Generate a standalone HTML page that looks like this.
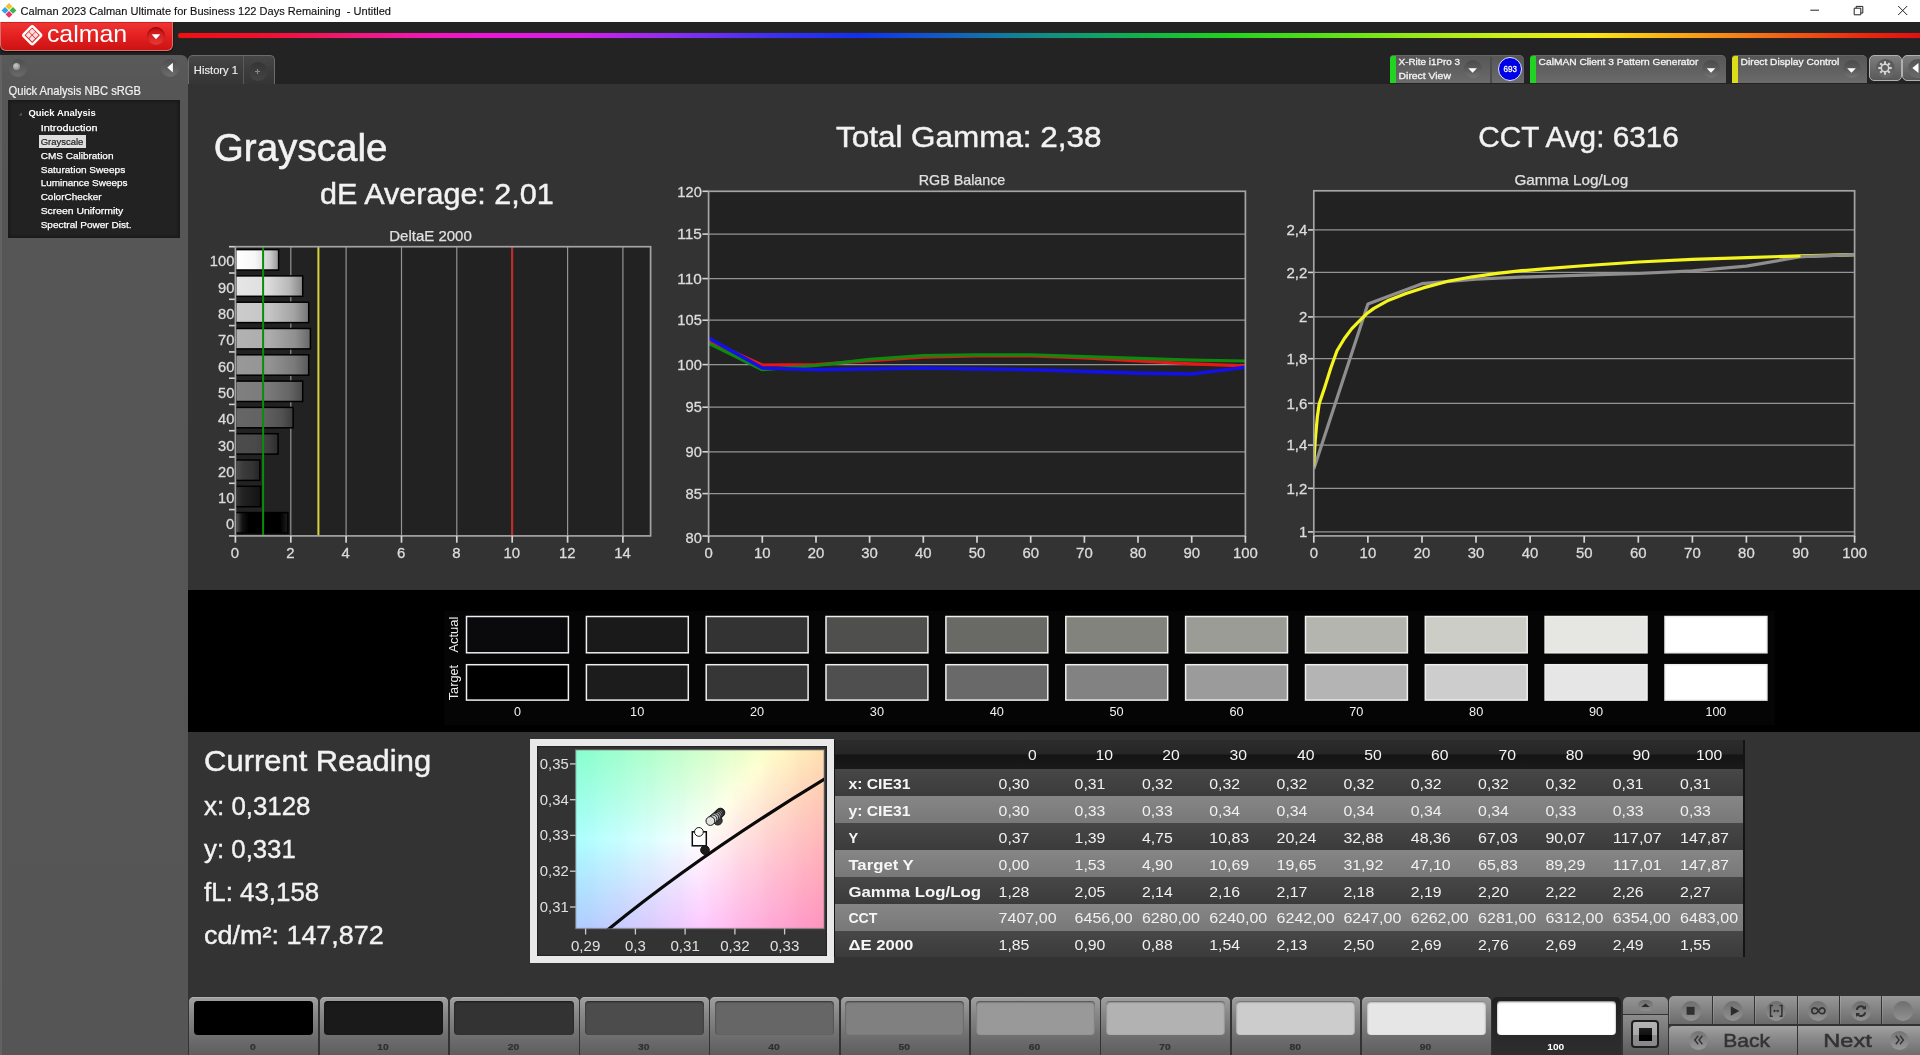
<!DOCTYPE html>
<html lang="en"><head><meta charset="utf-8"><title>Calman 2023 - Grayscale</title>
<style>
html,body{margin:0;padding:0}
body{width:1920px;height:1055px;position:relative;overflow:hidden;background:#333;font-family:"Liberation Sans", sans-serif}
body>div{position:absolute;box-sizing:border-box}
body>div div{position:absolute;box-sizing:border-box}
svg#ov{position:absolute;left:0;top:0;will-change:transform}
svg text{font-family:"Liberation Sans", sans-serif}

</style></head><body>
<div style="left:0px;top:0px;width:1920px;height:22px;background:#fff"></div>
<div style="left:0px;top:22px;width:1920px;height:62px;background:#232323"></div>
<div style="left:178px;top:33.3px;width:1742px;height:4.7px;border-radius:3px 0 0 3px;box-shadow:0 0 1.5px rgba(150,60,60,.45);background:linear-gradient(to right,#f01010 0%,#f01030 5%,#f01878 10%,#f018b0 13.9%,#e818d8 17.9%,#d020e8 23.2%,#8830f0 28.5%,#4030f0 33.8%,#1030f0 39%,#1060c0 44.3%,#108c88 49.5%,#10b050 54.8%,#20d020 60%,#50e018 65.3%,#90e818 70.5%,#c8f018 75.8%,#f8e818 81%,#f8a818 86.3%,#f06818 91.6%,#e82810 96.8%,#e01010 100%)"></div>
<div style="left:0px;top:22px;width:172.5px;height:28.5px;border-radius:0 0 6px 6px;background:linear-gradient(#b81818 0,#ee3434 5%,#e62222 45%,#cc1212 100%);border:1px solid #d87070;border-top:none;box-shadow:0 1px 2px rgba(0,0,0,.7)"></div>
<div style="left:147px;top:27px;width:18px;height:18px;border-radius:9px;background:linear-gradient(#c40d0d,#e83a3a);box-shadow:inset 0 1px 2px rgba(90,0,0,.6)"></div>
<div style="left:0px;top:54.5px;width:188px;height:1001px;background:linear-gradient(#5a5a5a 0,#565656 30px,#555555 100%);border-top-right-radius:7px;box-shadow:inset 2px 0 0 #626262"></div>
<div style="left:8.5px;top:59px;width:18px;height:18px;border-radius:9px;background:linear-gradient(#4e4e4e,#6a6a6a)"></div>
<div style="left:13.4px;top:63.2px;width:7px;height:7px;border-radius:4px;background:radial-gradient(circle at 40% 35%,#c8c8c8 0,#8a8a8a 80%)"></div>
<div style="left:161px;top:59.3px;width:18px;height:18px;border-radius:9px;background:linear-gradient(#4e4e4e,#6c6c6c)"></div>
<div style="left:8px;top:100px;width:172px;height:138px;background:#222;border:1px solid #1a1a1a;box-shadow:inset 0 0 3px #111"></div>
<div style="left:38.5px;top:135.2px;width:47.5px;height:13px;background:#dedede"></div>
<div style="left:187.8px;top:55px;width:86.8px;height:29px;border-radius:5px 5px 0 0;border:1px solid #6c6c6c;border-bottom:none;background:linear-gradient(#474747,#3a3a3a 60%,#353535)"></div>
<div style="left:242.5px;top:56px;width:1.5px;height:28px;background:#5a5a5a"></div>
<div style="left:248.5px;top:62px;width:18px;height:18px;border-radius:9px;background:linear-gradient(#353535,#434343);box-shadow:0 1px 0 rgba(255,255,255,.06)"></div>
<div style="left:1390px;top:55px;width:134px;height:28px;border-radius:4px 5px 0 0;background:linear-gradient(#565656,#646464 70%,#6b6b6b);box-shadow:inset 0 1px 0 #666"></div>
<div style="left:1390px;top:55.5px;width:6px;height:27.5px;border-radius:3px 0 0 0;background:#22d422"></div>
<div style="left:1463.6px;top:60px;width:18px;height:18px;border-radius:9px;background:linear-gradient(#4a4a4a 0,#5c5c5c 55%,#747474 100%)"></div>
<div style="left:1490.3px;top:57px;width:1.5px;height:26px;background:#4c4c4c"></div>
<div style="left:1498px;top:57px;width:24.4px;height:24.4px;border-radius:13px;background:#0000e6;border:1.3px solid #e6e6ff"></div>
<div style="left:1530px;top:55px;width:196px;height:28px;border-radius:4px 5px 0 0;background:linear-gradient(#565656,#646464 70%,#6b6b6b);box-shadow:inset 0 1px 0 #666"></div>
<div style="left:1530px;top:55.5px;width:6px;height:27.5px;border-radius:3px 0 0 0;background:#22d422"></div>
<div style="left:1702px;top:60px;width:18px;height:18px;border-radius:9px;background:linear-gradient(#4a4a4a 0,#5c5c5c 55%,#747474 100%)"></div>
<div style="left:1732px;top:55px;width:135px;height:28px;border-radius:4px 5px 0 0;background:linear-gradient(#565656,#646464 70%,#6b6b6b);box-shadow:inset 0 1px 0 #666"></div>
<div style="left:1732px;top:55.5px;width:6px;height:27.5px;border-radius:3px 0 0 0;background:#dcdc18"></div>
<div style="left:1842.5px;top:60px;width:18px;height:18px;border-radius:9px;background:linear-gradient(#4a4a4a 0,#5c5c5c 55%,#747474 100%)"></div>
<div style="left:1869px;top:55px;width:32.5px;height:26px;border-radius:5px;border:1px solid #b0b0b0;background:linear-gradient(#7e7e7e,#585858)"></div>
<div style="left:1875.5px;top:58.5px;width:19px;height:19px;border-radius:10px;background:linear-gradient(#555,#6a6a6a)"></div>
<div style="left:1902px;top:55px;width:32.5px;height:26px;border-radius:5px;border:1px solid #b0b0b0;background:linear-gradient(#7e7e7e,#585858)"></div>
<div style="left:1908px;top:58.5px;width:19px;height:19px;border-radius:10px;background:linear-gradient(#555,#6a6a6a)"></div>
<div style="left:188px;top:84px;width:1732px;height:505.5px;background:#333"></div>
<div style="left:188px;top:589.5px;width:1732px;height:142px;background:#000"></div>
<div style="left:188px;top:731.5px;width:1732px;height:323.5px;background:#333"></div>
<div style="left:529.5px;top:739px;width:304.5px;height:224px;background:#333;border:7px solid #e9e9e9;box-shadow:inset 0 0 2px #000"></div>
<div style="left:835.0px;top:740px;width:907.8px;height:29.1px;background:linear-gradient(#2c2c2c 0,#262626 48%,#141414 52%,#1a1a1a 100%)"></div>
<div style="left:835.0px;top:769.0px;width:907.8px;height:27.1px;background:linear-gradient(#474747,#3b3b3b)"></div>
<div style="left:835.0px;top:796.0px;width:907.8px;height:27.1px;background:linear-gradient(#868686,#787878)"></div>
<div style="left:835.0px;top:823.0px;width:907.8px;height:27.1px;background:linear-gradient(#474747,#3b3b3b)"></div>
<div style="left:835.0px;top:850.0px;width:907.8px;height:27.1px;background:linear-gradient(#868686,#787878)"></div>
<div style="left:835.0px;top:877.0px;width:907.8px;height:27.1px;background:linear-gradient(#474747,#3b3b3b)"></div>
<div style="left:835.0px;top:904.0px;width:907.8px;height:27.1px;background:linear-gradient(#868686,#787878)"></div>
<div style="left:835.0px;top:931.0px;width:907.8px;height:25.6px;background:linear-gradient(#474747,#3b3b3b)"></div>
<div style="left:1742.8px;top:740px;width:1.8px;height:216.6px;background:#141414"></div>
<div style="left:833.9px;top:740px;width:1.2px;height:216.6px;background:#161616"></div>
<div style="left:189.2px;top:996.7px;width:128.8px;height:60px;border-radius:5px 5px 0 0;background:linear-gradient(#a0a0a0 0,#8a8a8a 25%,#6c6c6c 70%,#5c5c5c 100%);box-shadow:inset 0 1px 0 #b0b0b0"></div>
<div style="left:193.8px;top:1001.3px;width:119.2px;height:33.8px;border-radius:4px;background:#000000;box-shadow:inset 0 1px 2px rgba(0,0,0,.55)"></div>
<div style="left:319.5px;top:996.7px;width:128.8px;height:60px;border-radius:5px 5px 0 0;background:linear-gradient(#a0a0a0 0,#8a8a8a 25%,#6c6c6c 70%,#5c5c5c 100%);box-shadow:inset 0 1px 0 #b0b0b0"></div>
<div style="left:324.1px;top:1001.3px;width:119.2px;height:33.8px;border-radius:4px;background:#1a1a1a;box-shadow:inset 0 1px 2px rgba(0,0,0,.55)"></div>
<div style="left:449.8px;top:996.7px;width:128.8px;height:60px;border-radius:5px 5px 0 0;background:linear-gradient(#a0a0a0 0,#8a8a8a 25%,#6c6c6c 70%,#5c5c5c 100%);box-shadow:inset 0 1px 0 #b0b0b0"></div>
<div style="left:454.4px;top:1001.3px;width:119.2px;height:33.8px;border-radius:4px;background:#333333;box-shadow:inset 0 1px 2px rgba(0,0,0,.55)"></div>
<div style="left:580.1px;top:996.7px;width:128.8px;height:60px;border-radius:5px 5px 0 0;background:linear-gradient(#a0a0a0 0,#8a8a8a 25%,#6c6c6c 70%,#5c5c5c 100%);box-shadow:inset 0 1px 0 #b0b0b0"></div>
<div style="left:584.7px;top:1001.3px;width:119.2px;height:33.8px;border-radius:4px;background:#4c4c4c;box-shadow:inset 0 1px 2px rgba(0,0,0,.55)"></div>
<div style="left:710.4px;top:996.7px;width:128.8px;height:60px;border-radius:5px 5px 0 0;background:linear-gradient(#a0a0a0 0,#8a8a8a 25%,#6c6c6c 70%,#5c5c5c 100%);box-shadow:inset 0 1px 0 #b0b0b0"></div>
<div style="left:715.0px;top:1001.3px;width:119.2px;height:33.8px;border-radius:4px;background:#666666;box-shadow:inset 0 1px 2px rgba(0,0,0,.55)"></div>
<div style="left:840.7px;top:996.7px;width:128.8px;height:60px;border-radius:5px 5px 0 0;background:linear-gradient(#a0a0a0 0,#8a8a8a 25%,#6c6c6c 70%,#5c5c5c 100%);box-shadow:inset 0 1px 0 #b0b0b0"></div>
<div style="left:845.3px;top:1001.3px;width:119.2px;height:33.8px;border-radius:4px;background:#808080;box-shadow:inset 0 1px 2px rgba(0,0,0,.55)"></div>
<div style="left:971.0px;top:996.7px;width:128.8px;height:60px;border-radius:5px 5px 0 0;background:linear-gradient(#a0a0a0 0,#8a8a8a 25%,#6c6c6c 70%,#5c5c5c 100%);box-shadow:inset 0 1px 0 #b0b0b0"></div>
<div style="left:975.6px;top:1001.3px;width:119.2px;height:33.8px;border-radius:4px;background:#999999;box-shadow:inset 0 1px 2px rgba(0,0,0,.55)"></div>
<div style="left:1101.3px;top:996.7px;width:128.8px;height:60px;border-radius:5px 5px 0 0;background:linear-gradient(#a0a0a0 0,#8a8a8a 25%,#6c6c6c 70%,#5c5c5c 100%);box-shadow:inset 0 1px 0 #b0b0b0"></div>
<div style="left:1105.9px;top:1001.3px;width:119.2px;height:33.8px;border-radius:4px;background:#b2b2b2;box-shadow:inset 0 1px 2px rgba(0,0,0,.55)"></div>
<div style="left:1231.6px;top:996.7px;width:128.8px;height:60px;border-radius:5px 5px 0 0;background:linear-gradient(#a0a0a0 0,#8a8a8a 25%,#6c6c6c 70%,#5c5c5c 100%);box-shadow:inset 0 1px 0 #b0b0b0"></div>
<div style="left:1236.2px;top:1001.3px;width:119.2px;height:33.8px;border-radius:4px;background:#cccccc;box-shadow:inset 0 1px 2px rgba(0,0,0,.55)"></div>
<div style="left:1361.9px;top:996.7px;width:128.8px;height:60px;border-radius:5px 5px 0 0;background:linear-gradient(#a0a0a0 0,#8a8a8a 25%,#6c6c6c 70%,#5c5c5c 100%);box-shadow:inset 0 1px 0 #b0b0b0"></div>
<div style="left:1366.5px;top:1001.3px;width:119.2px;height:33.8px;border-radius:4px;background:#e6e6e6;box-shadow:inset 0 1px 2px rgba(0,0,0,.55)"></div>
<div style="left:1492.2px;top:996.7px;width:128.8px;height:60px;border-radius:5px 5px 0 0;background:linear-gradient(#202020,#2e2e2e)"></div>
<div style="left:1496.8px;top:1001.3px;width:119.2px;height:33.8px;border-radius:4px;background:#ffffff;box-shadow:inset 0 1px 2px rgba(0,0,0,.55)"></div>
<div style="left:1623px;top:996.7px;width:45.2px;height:17px;border-radius:5px 5px 0 0;background:linear-gradient(#949494,#7c7c7c)"></div>
<div style="left:1623px;top:1014.6px;width:45.2px;height:41px;background:linear-gradient(#8c8c8c,#5a5a5a)"></div>
<div style="left:1638px;top:999.5px;width:15px;height:11px;border-radius:7px;background:linear-gradient(#6c6c6c,#8e8e8e)"></div>
<div style="left:1631px;top:1019.7px;width:28.3px;height:28.5px;border-radius:4px;border:2px solid #1e1e1e;background:linear-gradient(#b4b4b4 0,#a8a8a8 55%,#8c8c8c 56%,#888 100%)"></div>
<div style="left:1639px;top:1028px;width:13.2px;height:12.8px;background:linear-gradient(#1e1e1e 0,#111 50%,#000 51%)"></div>
<div style="left:1669.0px;top:996.4px;width:42.8px;height:28.1px;background:linear-gradient(#989898 0,#868686 40%,#6a6a6a 100%);border-radius:5px 0 0 0;box-shadow:inset 1px 0 0 rgba(255,255,255,.12)"></div>
<div style="left:1680.5px;top:1000.8px;width:20px;height:20px;border-radius:10px;background:linear-gradient(#6e6e6e,#929292)"></div>
<div style="left:1713.2px;top:996.4px;width:40.8px;height:28.1px;background:linear-gradient(#989898 0,#868686 40%,#6a6a6a 100%);border-radius:0 0 0 0;box-shadow:inset 1px 0 0 rgba(255,255,255,.12)"></div>
<div style="left:1723.0px;top:1000.8px;width:20px;height:20px;border-radius:10px;background:linear-gradient(#6e6e6e,#929292)"></div>
<div style="left:1755.4px;top:996.4px;width:41.4px;height:28.1px;background:linear-gradient(#989898 0,#868686 40%,#6a6a6a 100%);border-radius:0 0 0 0;box-shadow:inset 1px 0 0 rgba(255,255,255,.12)"></div>
<div style="left:1765.6px;top:1000.8px;width:20px;height:20px;border-radius:10px;background:linear-gradient(#6e6e6e,#929292)"></div>
<div style="left:1798.2px;top:996.4px;width:40.6px;height:28.1px;background:linear-gradient(#989898 0,#868686 40%,#6a6a6a 100%);border-radius:0 0 0 0;box-shadow:inset 1px 0 0 rgba(255,255,255,.12)"></div>
<div style="left:1808.2px;top:1000.8px;width:20px;height:20px;border-radius:10px;background:linear-gradient(#6e6e6e,#929292)"></div>
<div style="left:1840.2px;top:996.4px;width:40.8px;height:28.1px;background:linear-gradient(#989898 0,#868686 40%,#6a6a6a 100%);border-radius:0 0 0 0;box-shadow:inset 1px 0 0 rgba(255,255,255,.12)"></div>
<div style="left:1850.7px;top:1000.8px;width:20px;height:20px;border-radius:10px;background:linear-gradient(#6e6e6e,#929292)"></div>
<div style="left:1882.4px;top:996.4px;width:40.9px;height:28.1px;background:linear-gradient(#989898 0,#868686 40%,#6a6a6a 100%);border-radius:0 0 0 0;box-shadow:inset 1px 0 0 rgba(255,255,255,.12)"></div>
<div style="left:1893.2px;top:1000.8px;width:20px;height:20px;border-radius:10px;background:linear-gradient(#6e6e6e,#929292)"></div>
<div style="left:1669px;top:1026.2px;width:127.8px;height:30px;background:linear-gradient(#a2a2a2 0,#8c8c8c 35%,#6c6c6c 100%);border-radius:4px 0 0 0"></div>
<div style="left:1798.2px;top:1026.2px;width:125px;height:30px;background:linear-gradient(#a2a2a2 0,#8c8c8c 35%,#6c6c6c 100%)"></div>
<div style="left:1689px;top:1030.6px;width:19px;height:19px;border-radius:10px;background:linear-gradient(#747474,#989898)"></div>
<div style="left:1889.5px;top:1030.6px;width:19px;height:19px;border-radius:10px;background:linear-gradient(#747474,#989898)"></div>
<svg id="ov" width="1920" height="1055" viewBox="0 0 1920 1055">
<defs><linearGradient id="bg100" x1="0" x2="1" y1="0" y2="0"><stop offset="0" stop-color="#ffffff"/><stop offset="0.45" stop-color="#f7f7f7"/><stop offset="0.8" stop-color="#cccccc"/><stop offset="1" stop-color="#949494"/></linearGradient>
<linearGradient id="bg90" x1="0" x2="1" y1="0" y2="0"><stop offset="0" stop-color="#e6e6e6"/><stop offset="0.45" stop-color="#dfdfdf"/><stop offset="0.8" stop-color="#b8b8b8"/><stop offset="1" stop-color="#858585"/></linearGradient>
<linearGradient id="bg80" x1="0" x2="1" y1="0" y2="0"><stop offset="0" stop-color="#cccccc"/><stop offset="0.45" stop-color="#c6c6c6"/><stop offset="0.8" stop-color="#a3a3a3"/><stop offset="1" stop-color="#767676"/></linearGradient>
<linearGradient id="bg70" x1="0" x2="1" y1="0" y2="0"><stop offset="0" stop-color="#b2b2b2"/><stop offset="0.45" stop-color="#adadad"/><stop offset="0.8" stop-color="#8f8f8f"/><stop offset="1" stop-color="#686868"/></linearGradient>
<linearGradient id="bg60" x1="0" x2="1" y1="0" y2="0"><stop offset="0" stop-color="#999999"/><stop offset="0.45" stop-color="#949494"/><stop offset="0.8" stop-color="#7a7a7a"/><stop offset="1" stop-color="#595959"/></linearGradient>
<linearGradient id="bg50" x1="0" x2="1" y1="0" y2="0"><stop offset="0" stop-color="#808080"/><stop offset="0.45" stop-color="#7c7c7c"/><stop offset="0.8" stop-color="#666666"/><stop offset="1" stop-color="#4a4a4a"/></linearGradient>
<linearGradient id="bg40" x1="0" x2="1" y1="0" y2="0"><stop offset="0" stop-color="#666666"/><stop offset="0.45" stop-color="#636363"/><stop offset="0.8" stop-color="#525252"/><stop offset="1" stop-color="#3b3b3b"/></linearGradient>
<linearGradient id="bg30" x1="0" x2="1" y1="0" y2="0"><stop offset="0" stop-color="#4c4c4c"/><stop offset="0.45" stop-color="#4a4a4a"/><stop offset="0.8" stop-color="#3d3d3d"/><stop offset="1" stop-color="#2c2c2c"/></linearGradient>
<linearGradient id="bg20" x1="0" x2="1" y1="0" y2="0"><stop offset="0" stop-color="#4f4f4f"/><stop offset="0.3" stop-color="#3b3b3b"/><stop offset="0.7" stop-color="#333333"/><stop offset="1" stop-color="#242424"/></linearGradient>
<linearGradient id="bg10" x1="0" x2="1" y1="0" y2="0"><stop offset="0" stop-color="#363636"/><stop offset="0.3" stop-color="#222222"/><stop offset="0.7" stop-color="#1a1a1a"/><stop offset="1" stop-color="#121212"/></linearGradient>
<linearGradient id="bg0" x1="0" x2="1" y1="0" y2="0"><stop offset="0" stop-color="#5f5f5f"/><stop offset="0.12" stop-color="#141414"/><stop offset="0.25" stop-color="#000000"/><stop offset="0.85" stop-color="#000000"/><stop offset="1" stop-color="#1e1e1e"/></linearGradient>
<filter id="hb" x="-5%" y="-5%" width="110%" height="110%"><feGaussianBlur stdDeviation="3.5 0"/></filter>
<linearGradient id="cg0" x1="0" x2="0" y1="0" y2="1"><stop offset="0.0" stop-color="#7effce"/><stop offset="0.1" stop-color="#84ffd7"/><stop offset="0.2" stop-color="#8bffe0"/><stop offset="0.3" stop-color="#92ffea"/><stop offset="0.4" stop-color="#99fff4"/><stop offset="0.5" stop-color="#a1ffff"/><stop offset="0.6" stop-color="#a2f4ff"/><stop offset="0.7" stop-color="#a2eaff"/><stop offset="0.8" stop-color="#a3e0ff"/><stop offset="0.9" stop-color="#a4d6ff"/><stop offset="1.0" stop-color="#a5ccff"/></linearGradient>
<linearGradient id="cg1" x1="0" x2="0" y1="0" y2="1"><stop offset="0.0" stop-color="#81ffce"/><stop offset="0.1" stop-color="#88ffd7"/><stop offset="0.2" stop-color="#8effe0"/><stop offset="0.3" stop-color="#96ffea"/><stop offset="0.4" stop-color="#9dfff4"/><stop offset="0.5" stop-color="#a5ffff"/><stop offset="0.6" stop-color="#a5f4ff"/><stop offset="0.7" stop-color="#a6eaff"/><stop offset="0.8" stop-color="#a7dfff"/><stop offset="0.9" stop-color="#a8d6ff"/><stop offset="1.0" stop-color="#a8ccff"/></linearGradient>
<linearGradient id="cg2" x1="0" x2="0" y1="0" y2="1"><stop offset="0.0" stop-color="#85ffce"/><stop offset="0.1" stop-color="#8bffd7"/><stop offset="0.2" stop-color="#92ffe0"/><stop offset="0.3" stop-color="#99ffea"/><stop offset="0.4" stop-color="#a1fff4"/><stop offset="0.5" stop-color="#a9ffff"/><stop offset="0.6" stop-color="#a9f4ff"/><stop offset="0.7" stop-color="#aaeaff"/><stop offset="0.8" stop-color="#abdfff"/><stop offset="0.9" stop-color="#abd6ff"/><stop offset="1.0" stop-color="#acccff"/></linearGradient>
<linearGradient id="cg3" x1="0" x2="0" y1="0" y2="1"><stop offset="0.0" stop-color="#88ffce"/><stop offset="0.1" stop-color="#8fffd7"/><stop offset="0.2" stop-color="#96ffe0"/><stop offset="0.3" stop-color="#9dffea"/><stop offset="0.4" stop-color="#a5fff4"/><stop offset="0.5" stop-color="#adffff"/><stop offset="0.6" stop-color="#adf4ff"/><stop offset="0.7" stop-color="#aee9ff"/><stop offset="0.8" stop-color="#aedfff"/><stop offset="0.9" stop-color="#afd5ff"/><stop offset="1.0" stop-color="#b0ccff"/></linearGradient>
<linearGradient id="cg4" x1="0" x2="0" y1="0" y2="1"><stop offset="0.0" stop-color="#8cffcd"/><stop offset="0.1" stop-color="#92ffd6"/><stop offset="0.2" stop-color="#99ffe0"/><stop offset="0.3" stop-color="#a1ffea"/><stop offset="0.4" stop-color="#a8fff4"/><stop offset="0.5" stop-color="#b1ffff"/><stop offset="0.6" stop-color="#b1f4ff"/><stop offset="0.7" stop-color="#b2e9ff"/><stop offset="0.8" stop-color="#b2dfff"/><stop offset="0.9" stop-color="#b3d5ff"/><stop offset="1.0" stop-color="#b3ccff"/></linearGradient>
<linearGradient id="cg5" x1="0" x2="0" y1="0" y2="1"><stop offset="0.0" stop-color="#8fffcd"/><stop offset="0.1" stop-color="#96ffd6"/><stop offset="0.2" stop-color="#9dffe0"/><stop offset="0.3" stop-color="#a4ffea"/><stop offset="0.4" stop-color="#acfff4"/><stop offset="0.5" stop-color="#b5ffff"/><stop offset="0.6" stop-color="#b5f4ff"/><stop offset="0.7" stop-color="#b6e9ff"/><stop offset="0.8" stop-color="#b6dfff"/><stop offset="0.9" stop-color="#b7d5ff"/><stop offset="1.0" stop-color="#b7cbff"/></linearGradient>
<linearGradient id="cg6" x1="0" x2="0" y1="0" y2="1"><stop offset="0.0" stop-color="#93ffcd"/><stop offset="0.1" stop-color="#99ffd6"/><stop offset="0.2" stop-color="#a1ffe0"/><stop offset="0.3" stop-color="#a8ffea"/><stop offset="0.4" stop-color="#b0fff4"/><stop offset="0.5" stop-color="#b9ffff"/><stop offset="0.6" stop-color="#b9f4ff"/><stop offset="0.7" stop-color="#bae9ff"/><stop offset="0.8" stop-color="#badfff"/><stop offset="0.9" stop-color="#bad5ff"/><stop offset="1.0" stop-color="#bbcbff"/></linearGradient>
<linearGradient id="cg7" x1="0" x2="0" y1="0" y2="1"><stop offset="0.0" stop-color="#96ffcd"/><stop offset="0.1" stop-color="#9dffd6"/><stop offset="0.2" stop-color="#a4ffe0"/><stop offset="0.3" stop-color="#acffea"/><stop offset="0.4" stop-color="#b4fff4"/><stop offset="0.5" stop-color="#bdffff"/><stop offset="0.6" stop-color="#bdf4ff"/><stop offset="0.7" stop-color="#bde9ff"/><stop offset="0.8" stop-color="#bedfff"/><stop offset="0.9" stop-color="#bed5ff"/><stop offset="1.0" stop-color="#becbff"/></linearGradient>
<linearGradient id="cg8" x1="0" x2="0" y1="0" y2="1"><stop offset="0.0" stop-color="#9affcd"/><stop offset="0.1" stop-color="#a1ffd6"/><stop offset="0.2" stop-color="#a8ffdf"/><stop offset="0.3" stop-color="#b0ffe9"/><stop offset="0.4" stop-color="#b8fff4"/><stop offset="0.5" stop-color="#c1ffff"/><stop offset="0.6" stop-color="#c1f4ff"/><stop offset="0.7" stop-color="#c1e9ff"/><stop offset="0.8" stop-color="#c2dfff"/><stop offset="0.9" stop-color="#c2d5ff"/><stop offset="1.0" stop-color="#c2cbff"/></linearGradient>
<linearGradient id="cg9" x1="0" x2="0" y1="0" y2="1"><stop offset="0.0" stop-color="#9dffcd"/><stop offset="0.1" stop-color="#a4ffd6"/><stop offset="0.2" stop-color="#acffdf"/><stop offset="0.3" stop-color="#b4ffe9"/><stop offset="0.4" stop-color="#bcfff4"/><stop offset="0.5" stop-color="#c5ffff"/><stop offset="0.6" stop-color="#c5f4ff"/><stop offset="0.7" stop-color="#c5e9ff"/><stop offset="0.8" stop-color="#c6dfff"/><stop offset="0.9" stop-color="#c6d5ff"/><stop offset="1.0" stop-color="#c6cbff"/></linearGradient>
<linearGradient id="cg10" x1="0" x2="0" y1="0" y2="1"><stop offset="0.0" stop-color="#a1ffcd"/><stop offset="0.1" stop-color="#a8ffd6"/><stop offset="0.2" stop-color="#b0ffdf"/><stop offset="0.3" stop-color="#b8ffe9"/><stop offset="0.4" stop-color="#c0fff4"/><stop offset="0.5" stop-color="#c9ffff"/><stop offset="0.6" stop-color="#c9f4ff"/><stop offset="0.7" stop-color="#c9e9ff"/><stop offset="0.8" stop-color="#cadeff"/><stop offset="0.9" stop-color="#cad4ff"/><stop offset="1.0" stop-color="#cacbff"/></linearGradient>
<linearGradient id="cg11" x1="0" x2="0" y1="0" y2="1"><stop offset="0.0" stop-color="#a4ffcc"/><stop offset="0.1" stop-color="#acffd6"/><stop offset="0.2" stop-color="#b3ffdf"/><stop offset="0.3" stop-color="#bcffe9"/><stop offset="0.4" stop-color="#c4fff4"/><stop offset="0.5" stop-color="#cdffff"/><stop offset="0.6" stop-color="#cdf4ff"/><stop offset="0.7" stop-color="#cde9ff"/><stop offset="0.8" stop-color="#cedeff"/><stop offset="0.9" stop-color="#ced4ff"/><stop offset="1.0" stop-color="#cecaff"/></linearGradient>
<linearGradient id="cg12" x1="0" x2="0" y1="0" y2="1"><stop offset="0.0" stop-color="#a8ffcc"/><stop offset="0.1" stop-color="#afffd5"/><stop offset="0.2" stop-color="#b7ffdf"/><stop offset="0.3" stop-color="#c0ffe9"/><stop offset="0.4" stop-color="#c8fff4"/><stop offset="0.5" stop-color="#d2ffff"/><stop offset="0.6" stop-color="#d2f4ff"/><stop offset="0.7" stop-color="#d2e9ff"/><stop offset="0.8" stop-color="#d2deff"/><stop offset="0.9" stop-color="#d2d4ff"/><stop offset="1.0" stop-color="#d2caff"/></linearGradient>
<linearGradient id="cg13" x1="0" x2="0" y1="0" y2="1"><stop offset="0.0" stop-color="#abffcc"/><stop offset="0.1" stop-color="#b3ffd5"/><stop offset="0.2" stop-color="#bbffdf"/><stop offset="0.3" stop-color="#c4ffe9"/><stop offset="0.4" stop-color="#ccfff4"/><stop offset="0.5" stop-color="#d6ffff"/><stop offset="0.6" stop-color="#d6f4ff"/><stop offset="0.7" stop-color="#d6e9ff"/><stop offset="0.8" stop-color="#d6deff"/><stop offset="0.9" stop-color="#d6d4ff"/><stop offset="1.0" stop-color="#d5caff"/></linearGradient>
<linearGradient id="cg14" x1="0" x2="0" y1="0" y2="1"><stop offset="0.0" stop-color="#afffcc"/><stop offset="0.1" stop-color="#b7ffd5"/><stop offset="0.2" stop-color="#bfffdf"/><stop offset="0.3" stop-color="#c8ffe9"/><stop offset="0.4" stop-color="#d1fff4"/><stop offset="0.5" stop-color="#daffff"/><stop offset="0.6" stop-color="#daf4ff"/><stop offset="0.7" stop-color="#dae9ff"/><stop offset="0.8" stop-color="#dadeff"/><stop offset="0.9" stop-color="#dad4ff"/><stop offset="1.0" stop-color="#d9caff"/></linearGradient>
<linearGradient id="cg15" x1="0" x2="0" y1="0" y2="1"><stop offset="0.0" stop-color="#b3ffcc"/><stop offset="0.1" stop-color="#bbffd5"/><stop offset="0.2" stop-color="#c3ffdf"/><stop offset="0.3" stop-color="#ccffe9"/><stop offset="0.4" stop-color="#d5fff4"/><stop offset="0.5" stop-color="#deffff"/><stop offset="0.6" stop-color="#def3ff"/><stop offset="0.7" stop-color="#dee8ff"/><stop offset="0.8" stop-color="#dedeff"/><stop offset="0.9" stop-color="#ded4ff"/><stop offset="1.0" stop-color="#ddcaff"/></linearGradient>
<linearGradient id="cg16" x1="0" x2="0" y1="0" y2="1"><stop offset="0.0" stop-color="#b6ffcc"/><stop offset="0.1" stop-color="#beffd5"/><stop offset="0.2" stop-color="#c7ffdf"/><stop offset="0.3" stop-color="#d0ffe9"/><stop offset="0.4" stop-color="#d9fff4"/><stop offset="0.5" stop-color="#e3ffff"/><stop offset="0.6" stop-color="#e2f3ff"/><stop offset="0.7" stop-color="#e2e8ff"/><stop offset="0.8" stop-color="#e2deff"/><stop offset="0.9" stop-color="#e2d3ff"/><stop offset="1.0" stop-color="#e1c9ff"/></linearGradient>
<linearGradient id="cg17" x1="0" x2="0" y1="0" y2="1"><stop offset="0.0" stop-color="#baffcb"/><stop offset="0.1" stop-color="#c2ffd5"/><stop offset="0.2" stop-color="#cbffdf"/><stop offset="0.3" stop-color="#d4ffe9"/><stop offset="0.4" stop-color="#ddfff4"/><stop offset="0.5" stop-color="#e7ffff"/><stop offset="0.6" stop-color="#e7f3ff"/><stop offset="0.7" stop-color="#e6e8ff"/><stop offset="0.8" stop-color="#e6deff"/><stop offset="0.9" stop-color="#e6d3ff"/><stop offset="1.0" stop-color="#e5c9ff"/></linearGradient>
<linearGradient id="cg18" x1="0" x2="0" y1="0" y2="1"><stop offset="0.0" stop-color="#beffcb"/><stop offset="0.1" stop-color="#c6ffd5"/><stop offset="0.2" stop-color="#cfffde"/><stop offset="0.3" stop-color="#d8ffe9"/><stop offset="0.4" stop-color="#e2fff4"/><stop offset="0.5" stop-color="#ecffff"/><stop offset="0.6" stop-color="#ebf3ff"/><stop offset="0.7" stop-color="#ebe8ff"/><stop offset="0.8" stop-color="#eaddff"/><stop offset="0.9" stop-color="#ead3ff"/><stop offset="1.0" stop-color="#e9c9ff"/></linearGradient>
<linearGradient id="cg19" x1="0" x2="0" y1="0" y2="1"><stop offset="0.0" stop-color="#c2ffcb"/><stop offset="0.1" stop-color="#caffd4"/><stop offset="0.2" stop-color="#d3ffde"/><stop offset="0.3" stop-color="#dcffe9"/><stop offset="0.4" stop-color="#e6fff4"/><stop offset="0.5" stop-color="#f0ffff"/><stop offset="0.6" stop-color="#eff3ff"/><stop offset="0.7" stop-color="#efe8ff"/><stop offset="0.8" stop-color="#eeddff"/><stop offset="0.9" stop-color="#eed3ff"/><stop offset="1.0" stop-color="#edc9ff"/></linearGradient>
<linearGradient id="cg20" x1="0" x2="0" y1="0" y2="1"><stop offset="0.0" stop-color="#c5ffcb"/><stop offset="0.1" stop-color="#ceffd4"/><stop offset="0.2" stop-color="#d7ffde"/><stop offset="0.3" stop-color="#e0ffe9"/><stop offset="0.4" stop-color="#eafff4"/><stop offset="0.5" stop-color="#f5ffff"/><stop offset="0.6" stop-color="#f4f3ff"/><stop offset="0.7" stop-color="#f3e8ff"/><stop offset="0.8" stop-color="#f3ddff"/><stop offset="0.9" stop-color="#f2d3ff"/><stop offset="1.0" stop-color="#f2c9ff"/></linearGradient>
<linearGradient id="cg21" x1="0" x2="0" y1="0" y2="1"><stop offset="0.0" stop-color="#c9ffcb"/><stop offset="0.1" stop-color="#d2ffd4"/><stop offset="0.2" stop-color="#dbffde"/><stop offset="0.3" stop-color="#e5ffe9"/><stop offset="0.4" stop-color="#effff4"/><stop offset="0.5" stop-color="#f9ffff"/><stop offset="0.6" stop-color="#f8f3ff"/><stop offset="0.7" stop-color="#f8e8ff"/><stop offset="0.8" stop-color="#f7ddff"/><stop offset="0.9" stop-color="#f6d3ff"/><stop offset="1.0" stop-color="#f6c9ff"/></linearGradient>
<linearGradient id="cg22" x1="0" x2="0" y1="0" y2="1"><stop offset="0.0" stop-color="#cdffcb"/><stop offset="0.1" stop-color="#d6ffd4"/><stop offset="0.2" stop-color="#dfffde"/><stop offset="0.3" stop-color="#e9ffe8"/><stop offset="0.4" stop-color="#f3fff3"/><stop offset="0.5" stop-color="#feffff"/><stop offset="0.6" stop-color="#fdf3ff"/><stop offset="0.7" stop-color="#fce8ff"/><stop offset="0.8" stop-color="#fbddff"/><stop offset="0.9" stop-color="#fbd2ff"/><stop offset="1.0" stop-color="#fac8ff"/></linearGradient>
<linearGradient id="cg23" x1="0" x2="0" y1="0" y2="1"><stop offset="0.0" stop-color="#d1ffca"/><stop offset="0.1" stop-color="#daffd4"/><stop offset="0.2" stop-color="#e3ffde"/><stop offset="0.3" stop-color="#edffe8"/><stop offset="0.4" stop-color="#f7fff3"/><stop offset="0.5" stop-color="#fffcfc"/><stop offset="0.6" stop-color="#fff1fd"/><stop offset="0.7" stop-color="#ffe6fe"/><stop offset="0.8" stop-color="#ffdcfe"/><stop offset="0.9" stop-color="#ffd2ff"/><stop offset="1.0" stop-color="#fec8ff"/></linearGradient>
<linearGradient id="cg24" x1="0" x2="0" y1="0" y2="1"><stop offset="0.0" stop-color="#d5ffca"/><stop offset="0.1" stop-color="#deffd4"/><stop offset="0.2" stop-color="#e7ffde"/><stop offset="0.3" stop-color="#f1ffe8"/><stop offset="0.4" stop-color="#fcfff3"/><stop offset="0.5" stop-color="#fff7f7"/><stop offset="0.6" stop-color="#ffedf8"/><stop offset="0.7" stop-color="#ffe2f9"/><stop offset="0.8" stop-color="#ffd8fa"/><stop offset="0.9" stop-color="#ffcffb"/><stop offset="1.0" stop-color="#ffc5fc"/></linearGradient>
<linearGradient id="cg25" x1="0" x2="0" y1="0" y2="1"><stop offset="0.0" stop-color="#d9ffca"/><stop offset="0.1" stop-color="#e2ffd4"/><stop offset="0.2" stop-color="#ecffde"/><stop offset="0.3" stop-color="#f6ffe8"/><stop offset="0.4" stop-color="#fffef2"/><stop offset="0.5" stop-color="#fff3f3"/><stop offset="0.6" stop-color="#ffe9f4"/><stop offset="0.7" stop-color="#ffdff5"/><stop offset="0.8" stop-color="#ffd5f6"/><stop offset="0.9" stop-color="#ffcbf7"/><stop offset="1.0" stop-color="#ffc2f8"/></linearGradient>
<linearGradient id="cg26" x1="0" x2="0" y1="0" y2="1"><stop offset="0.0" stop-color="#ddffca"/><stop offset="0.1" stop-color="#e6ffd3"/><stop offset="0.2" stop-color="#f0ffde"/><stop offset="0.3" stop-color="#faffe8"/><stop offset="0.4" stop-color="#fff9ee"/><stop offset="0.5" stop-color="#ffefef"/><stop offset="0.6" stop-color="#ffe5f0"/><stop offset="0.7" stop-color="#ffdbf1"/><stop offset="0.8" stop-color="#ffd1f2"/><stop offset="0.9" stop-color="#ffc8f3"/><stop offset="1.0" stop-color="#ffbff4"/></linearGradient>
<linearGradient id="cg27" x1="0" x2="0" y1="0" y2="1"><stop offset="0.0" stop-color="#e1ffca"/><stop offset="0.1" stop-color="#eaffd3"/><stop offset="0.2" stop-color="#f4ffdd"/><stop offset="0.3" stop-color="#ffffe8"/><stop offset="0.4" stop-color="#fff5ea"/><stop offset="0.5" stop-color="#ffebeb"/><stop offset="0.6" stop-color="#ffe1ec"/><stop offset="0.7" stop-color="#ffd7ed"/><stop offset="0.8" stop-color="#ffceee"/><stop offset="0.9" stop-color="#ffc4ef"/><stop offset="1.0" stop-color="#ffbcf0"/></linearGradient>
<linearGradient id="cg28" x1="0" x2="0" y1="0" y2="1"><stop offset="0.0" stop-color="#e5ffca"/><stop offset="0.1" stop-color="#eeffd3"/><stop offset="0.2" stop-color="#f8ffdd"/><stop offset="0.3" stop-color="#fffbe4"/><stop offset="0.4" stop-color="#fff1e6"/><stop offset="0.5" stop-color="#ffe7e7"/><stop offset="0.6" stop-color="#ffdde8"/><stop offset="0.7" stop-color="#ffd3e9"/><stop offset="0.8" stop-color="#ffcaea"/><stop offset="0.9" stop-color="#ffc1eb"/><stop offset="1.0" stop-color="#ffb8ec"/></linearGradient>
<linearGradient id="cg29" x1="0" x2="0" y1="0" y2="1"><stop offset="0.0" stop-color="#e9ffc9"/><stop offset="0.1" stop-color="#f3ffd3"/><stop offset="0.2" stop-color="#fdffdd"/><stop offset="0.3" stop-color="#fff7e1"/><stop offset="0.4" stop-color="#ffede2"/><stop offset="0.5" stop-color="#ffe3e3"/><stop offset="0.6" stop-color="#ffd9e4"/><stop offset="0.7" stop-color="#ffd0e5"/><stop offset="0.8" stop-color="#ffc7e6"/><stop offset="0.9" stop-color="#ffbee7"/><stop offset="1.0" stop-color="#ffb5e9"/></linearGradient>
<linearGradient id="cg30" x1="0" x2="0" y1="0" y2="1"><stop offset="0.0" stop-color="#edffc9"/><stop offset="0.1" stop-color="#f7ffd3"/><stop offset="0.2" stop-color="#fffddb"/><stop offset="0.3" stop-color="#fff3dd"/><stop offset="0.4" stop-color="#ffe9de"/><stop offset="0.5" stop-color="#ffdfdf"/><stop offset="0.6" stop-color="#ffd6e0"/><stop offset="0.7" stop-color="#ffcce2"/><stop offset="0.8" stop-color="#ffc3e3"/><stop offset="0.9" stop-color="#ffbbe4"/><stop offset="1.0" stop-color="#ffb2e5"/></linearGradient>
<linearGradient id="cg31" x1="0" x2="0" y1="0" y2="1"><stop offset="0.0" stop-color="#f1ffc9"/><stop offset="0.1" stop-color="#fbffd3"/><stop offset="0.2" stop-color="#fff9d8"/><stop offset="0.3" stop-color="#ffefd9"/><stop offset="0.4" stop-color="#ffe5da"/><stop offset="0.5" stop-color="#ffdbdc"/><stop offset="0.6" stop-color="#ffd2dd"/><stop offset="0.7" stop-color="#ffc9de"/><stop offset="0.8" stop-color="#ffc0df"/><stop offset="0.9" stop-color="#ffb8e0"/><stop offset="1.0" stop-color="#ffafe1"/></linearGradient>
<linearGradient id="cg32" x1="0" x2="0" y1="0" y2="1"><stop offset="0.0" stop-color="#f5ffc9"/><stop offset="0.1" stop-color="#ffffd2"/><stop offset="0.2" stop-color="#fff5d4"/><stop offset="0.3" stop-color="#ffebd5"/><stop offset="0.4" stop-color="#ffe1d7"/><stop offset="0.5" stop-color="#ffd8d8"/><stop offset="0.6" stop-color="#ffcfd9"/><stop offset="0.7" stop-color="#ffc6da"/><stop offset="0.8" stop-color="#ffbddc"/><stop offset="0.9" stop-color="#ffb5dd"/><stop offset="1.0" stop-color="#ffadde"/></linearGradient>
<linearGradient id="cg33" x1="0" x2="0" y1="0" y2="1"><stop offset="0.0" stop-color="#f9ffc9"/><stop offset="0.1" stop-color="#fffbcf"/><stop offset="0.2" stop-color="#fff1d0"/><stop offset="0.3" stop-color="#ffe7d2"/><stop offset="0.4" stop-color="#ffddd3"/><stop offset="0.5" stop-color="#ffd4d4"/><stop offset="0.6" stop-color="#ffcbd6"/><stop offset="0.7" stop-color="#ffc3d7"/><stop offset="0.8" stop-color="#ffbad8"/><stop offset="0.9" stop-color="#ffb2d9"/><stop offset="1.0" stop-color="#ffaadb"/></linearGradient>
<linearGradient id="cg34" x1="0" x2="0" y1="0" y2="1"><stop offset="0.0" stop-color="#fdffc9"/><stop offset="0.1" stop-color="#fff6cb"/><stop offset="0.2" stop-color="#ffedcd"/><stop offset="0.3" stop-color="#ffe3ce"/><stop offset="0.4" stop-color="#ffdad0"/><stop offset="0.5" stop-color="#ffd1d1"/><stop offset="0.6" stop-color="#ffc8d2"/><stop offset="0.7" stop-color="#ffbfd4"/><stop offset="0.8" stop-color="#ffb7d5"/><stop offset="0.9" stop-color="#ffafd6"/><stop offset="1.0" stop-color="#ffa7d7"/></linearGradient>
<linearGradient id="cg35" x1="0" x2="0" y1="0" y2="1"><stop offset="0.0" stop-color="#fffcc6"/><stop offset="0.1" stop-color="#fff2c8"/><stop offset="0.2" stop-color="#ffe9c9"/><stop offset="0.3" stop-color="#ffdfcb"/><stop offset="0.4" stop-color="#ffd6cc"/><stop offset="0.5" stop-color="#ffcdce"/><stop offset="0.6" stop-color="#ffc5cf"/><stop offset="0.7" stop-color="#ffbcd0"/><stop offset="0.8" stop-color="#ffb4d2"/><stop offset="0.9" stop-color="#ffacd3"/><stop offset="1.0" stop-color="#ffa4d4"/></linearGradient>
<linearGradient id="cg36" x1="0" x2="0" y1="0" y2="1"><stop offset="0.0" stop-color="#fff8c3"/><stop offset="0.1" stop-color="#ffefc4"/><stop offset="0.2" stop-color="#ffe5c6"/><stop offset="0.3" stop-color="#ffdcc8"/><stop offset="0.4" stop-color="#ffd3c9"/><stop offset="0.5" stop-color="#ffcaca"/><stop offset="0.6" stop-color="#ffc2cc"/><stop offset="0.7" stop-color="#ffb9cd"/><stop offset="0.8" stop-color="#ffb1cf"/><stop offset="0.9" stop-color="#ffaad0"/><stop offset="1.0" stop-color="#ffa2d1"/></linearGradient>
<linearGradient id="cg37" x1="0" x2="0" y1="0" y2="1"><stop offset="0.0" stop-color="#fff4c0"/><stop offset="0.1" stop-color="#ffebc1"/><stop offset="0.2" stop-color="#ffe1c3"/><stop offset="0.3" stop-color="#ffd8c4"/><stop offset="0.4" stop-color="#ffd0c6"/><stop offset="0.5" stop-color="#ffc7c7"/><stop offset="0.6" stop-color="#ffbfc9"/><stop offset="0.7" stop-color="#ffb7ca"/><stop offset="0.8" stop-color="#ffafcb"/><stop offset="0.9" stop-color="#ffa7cd"/><stop offset="1.0" stop-color="#ff9fce"/></linearGradient>
<linearGradient id="cg38" x1="0" x2="0" y1="0" y2="1"><stop offset="0.0" stop-color="#fff0bc"/><stop offset="0.1" stop-color="#ffe7be"/><stop offset="0.2" stop-color="#ffdec0"/><stop offset="0.3" stop-color="#ffd5c1"/><stop offset="0.4" stop-color="#ffccc3"/><stop offset="0.5" stop-color="#ffc4c4"/><stop offset="0.6" stop-color="#ffbcc6"/><stop offset="0.7" stop-color="#ffb4c7"/><stop offset="0.8" stop-color="#ffacc8"/><stop offset="0.9" stop-color="#ffa4ca"/><stop offset="1.0" stop-color="#ff9dcb"/></linearGradient>
<linearGradient id="cg39" x1="0" x2="0" y1="0" y2="1"><stop offset="0.0" stop-color="#ffedb9"/><stop offset="0.1" stop-color="#ffe3bb"/><stop offset="0.2" stop-color="#ffdabc"/><stop offset="0.3" stop-color="#ffd2be"/><stop offset="0.4" stop-color="#ffc9c0"/><stop offset="0.5" stop-color="#ffc1c1"/><stop offset="0.6" stop-color="#ffb9c3"/><stop offset="0.7" stop-color="#ffb1c4"/><stop offset="0.8" stop-color="#ffa9c5"/><stop offset="0.9" stop-color="#ffa2c7"/><stop offset="1.0" stop-color="#ff9ac8"/></linearGradient>
<linearGradient id="cg40" x1="0" x2="0" y1="0" y2="1"><stop offset="0.0" stop-color="#ffe9b6"/><stop offset="0.1" stop-color="#ffe0b8"/><stop offset="0.2" stop-color="#ffd7b9"/><stop offset="0.3" stop-color="#ffcebb"/><stop offset="0.4" stop-color="#ffc6bd"/><stop offset="0.5" stop-color="#ffbebe"/><stop offset="0.6" stop-color="#ffb6c0"/><stop offset="0.7" stop-color="#ffaec1"/><stop offset="0.8" stop-color="#ffa7c3"/><stop offset="0.9" stop-color="#ff9fc4"/><stop offset="1.0" stop-color="#ff98c5"/></linearGradient>
<linearGradient id="cg41" x1="0" x2="0" y1="0" y2="1"><stop offset="0.0" stop-color="#ffe5b3"/><stop offset="0.1" stop-color="#ffdcb5"/><stop offset="0.2" stop-color="#ffd4b7"/><stop offset="0.3" stop-color="#ffcbb8"/><stop offset="0.4" stop-color="#ffc3ba"/><stop offset="0.5" stop-color="#ffbbbb"/><stop offset="0.6" stop-color="#ffb3bd"/><stop offset="0.7" stop-color="#ffacbe"/><stop offset="0.8" stop-color="#ffa4c0"/><stop offset="0.9" stop-color="#ff9dc1"/><stop offset="1.0" stop-color="#ff96c2"/></linearGradient>
<linearGradient id="cg42" x1="0" x2="0" y1="0" y2="1"><stop offset="0.0" stop-color="#ffe2b0"/><stop offset="0.1" stop-color="#ffd9b2"/><stop offset="0.2" stop-color="#ffd1b4"/><stop offset="0.3" stop-color="#ffc8b5"/><stop offset="0.4" stop-color="#ffc0b7"/><stop offset="0.5" stop-color="#ffb8b8"/><stop offset="0.6" stop-color="#ffb0ba"/><stop offset="0.7" stop-color="#ffa9bb"/><stop offset="0.8" stop-color="#ffa2bd"/><stop offset="0.9" stop-color="#ff9abe"/><stop offset="1.0" stop-color="#ff93c0"/></linearGradient>
<linearGradient id="cg43" x1="0" x2="0" y1="0" y2="1"><stop offset="0.0" stop-color="#ffdead"/><stop offset="0.1" stop-color="#ffd6af"/><stop offset="0.2" stop-color="#ffcdb1"/><stop offset="0.3" stop-color="#ffc5b2"/><stop offset="0.4" stop-color="#ffbdb4"/><stop offset="0.5" stop-color="#ffb5b6"/><stop offset="0.6" stop-color="#ffaeb7"/><stop offset="0.7" stop-color="#ffa6b9"/><stop offset="0.8" stop-color="#ff9fba"/><stop offset="0.9" stop-color="#ff98bc"/><stop offset="1.0" stop-color="#ff91bd"/></linearGradient>
<linearGradient id="cg44" x1="0" x2="0" y1="0" y2="1"><stop offset="0.0" stop-color="#ffdbab"/><stop offset="0.1" stop-color="#ffd3ac"/><stop offset="0.2" stop-color="#ffcaae"/><stop offset="0.3" stop-color="#ffc2b0"/><stop offset="0.4" stop-color="#ffbab1"/><stop offset="0.5" stop-color="#ffb3b3"/><stop offset="0.6" stop-color="#ffabb5"/><stop offset="0.7" stop-color="#ffa4b6"/><stop offset="0.8" stop-color="#ff9db8"/><stop offset="0.9" stop-color="#ff96b9"/><stop offset="1.0" stop-color="#ff8fba"/></linearGradient>
<linearGradient id="cg45" x1="0" x2="0" y1="0" y2="1"><stop offset="0.0" stop-color="#ffd8a8"/><stop offset="0.1" stop-color="#ffcfaa"/><stop offset="0.2" stop-color="#ffc7ab"/><stop offset="0.3" stop-color="#ffbfad"/><stop offset="0.4" stop-color="#ffb8af"/><stop offset="0.5" stop-color="#ffb0b0"/><stop offset="0.6" stop-color="#ffa9b2"/><stop offset="0.7" stop-color="#ffa1b3"/><stop offset="0.8" stop-color="#ff9ab5"/><stop offset="0.9" stop-color="#ff94b6"/><stop offset="1.0" stop-color="#ff8db8"/></linearGradient></defs>
<g transform="translate(9,10.4) scale(0.94) rotate(45)"><rect x="-5.6" y="-5.6" width="5.2" height="5.2" fill="#f2c230"/><rect x="0.4" y="-5.6" width="5.2" height="5.2" fill="#3db54a"/><rect x="-5.6" y="0.4" width="5.2" height="5.2" fill="#2aa6e0"/><rect x="0.4" y="0.4" width="5.2" height="5.2" fill="#e8316e"/></g>
<text x="20.5" y="14.6" font-size="11.6" textLength="370.5" lengthAdjust="spacingAndGlyphs" fill="#111" xml:space="preserve" stroke="#111" stroke-width="0.15">Calman 2023 Calman Ultimate for Business 122 Days Remaining  - Untitled</text>
<path d="M1810.3 10.2H1819" stroke="#222" stroke-width="1" fill="none"/>
<path d="M1854.2 8.2h6.6v6.6h-6.6z M1856.2 8.2v-1.8h6.6v6.6h-2" stroke="#222" stroke-width="1" fill="none"/>
<path d="M1898.2 6l9 9M1907.2 6l-9 9" stroke="#222" stroke-width="1" fill="none"/>
<g transform="translate(32.2,35.2) rotate(45)"><rect x="-6.7" y="-6.7" width="13.4" height="13.4" rx="1.6" fill="none" stroke="#fff" stroke-width="2.5"/><rect x="-4.6" y="-4.6" width="4.3" height="4.3" rx="0.6" fill="#fff" fill-opacity="0.86"/><rect x="-4.6" y="0.3000000000000007" width="4.3" height="4.3" rx="0.6" fill="#fff" fill-opacity="0.86"/><rect x="0.3000000000000007" y="-4.6" width="4.3" height="4.3" rx="0.6" fill="#fff" fill-opacity="0.86"/><rect x="0.3000000000000007" y="0.3000000000000007" width="4.3" height="4.3" rx="0.6" fill="#fff" fill-opacity="0.86"/></g>
<text x="46.9" y="41.8" font-size="24" textLength="80.3" lengthAdjust="spacingAndGlyphs" fill="#fff">calman</text>
<path d="M151.6 34.3h8.8l-4.4 5z" fill="#fff"/>
<path d="M167.3 67.6l5.6-4.8v9.6z" fill="#fff"/>
<text x="8.5" y="95.4" font-size="11.9" textLength="132.5" lengthAdjust="spacingAndGlyphs" fill="#f0f0f0" stroke="#f0f0f0" stroke-width="0.2">Quick Analysis NBC sRGB</text>
<path d="M21.800 112.400v3.200h-3.200z" fill="#5c5c5c"/>
<text x="28.4" y="116.4" font-size="9.7" font-weight="bold" textLength="67.3" lengthAdjust="spacingAndGlyphs" fill="#fff">Quick Analysis</text>
<text x="40.7" y="131.2" font-size="9.7" textLength="56.8" lengthAdjust="spacingAndGlyphs" fill="#fff" stroke="#fff" stroke-width="0.25">Introduction</text>
<text x="40.7" y="145.0" font-size="9.7" textLength="42.7" lengthAdjust="spacingAndGlyphs" fill="#222" stroke="#222" stroke-width="0.2">Grayscale</text>
<text x="40.7" y="158.8" font-size="9.7" textLength="72.8" lengthAdjust="spacingAndGlyphs" fill="#fff" stroke="#fff" stroke-width="0.25">CMS Calibration</text>
<text x="40.7" y="172.6" font-size="9.7" textLength="84.5" lengthAdjust="spacingAndGlyphs" fill="#fff" stroke="#fff" stroke-width="0.25">Saturation Sweeps</text>
<text x="40.7" y="186.4" font-size="9.7" textLength="86.8" lengthAdjust="spacingAndGlyphs" fill="#fff" stroke="#fff" stroke-width="0.25">Luminance Sweeps</text>
<text x="40.7" y="200.2" font-size="9.7" textLength="60.8" lengthAdjust="spacingAndGlyphs" fill="#fff" stroke="#fff" stroke-width="0.25">ColorChecker</text>
<text x="40.7" y="214.0" font-size="9.7" textLength="82.6" lengthAdjust="spacingAndGlyphs" fill="#fff" stroke="#fff" stroke-width="0.25">Screen Uniformity</text>
<text x="40.7" y="227.8" font-size="9.7" textLength="90.8" lengthAdjust="spacingAndGlyphs" fill="#fff" stroke="#fff" stroke-width="0.25">Spectral Power Dist.</text>
<text x="193.8" y="73.8" font-size="11.4" textLength="44.3" lengthAdjust="spacingAndGlyphs" fill="#f0f0f0" stroke="#f0f0f0" stroke-width="0.15">History 1</text>
<path d="M255 71.5h5M257.5 69v5" stroke="#888" stroke-width="1.1" fill="none"/>
<text x="1398.6" y="65.1" font-size="9.5" textLength="61.5" lengthAdjust="spacingAndGlyphs" fill="#f4f4f4" stroke="#f4f4f4" stroke-width="0.3">X-Rite i1Pro 3</text>
<text x="1398.6" y="79.3" font-size="9.5" textLength="52.3" lengthAdjust="spacingAndGlyphs" fill="#f4f4f4" stroke="#f4f4f4" stroke-width="0.3">Direct View</text>
<path d="M1468.3 68.2h8.6l-4.3 4.6z" fill="#fff"/>
<text x="1510.3" y="72.3" font-size="9.0" text-anchor="middle" textLength="13.4" lengthAdjust="spacingAndGlyphs" fill="#fff" stroke="#fff" stroke-width="0.3">693</text>
<text x="1538.6" y="65.1" font-size="9.5" textLength="159.8" lengthAdjust="spacingAndGlyphs" fill="#f4f4f4" stroke="#f4f4f4" stroke-width="0.3">CalMAN Client 3 Pattern Generator</text>
<path d="M1706.7 68.2h8.6l-4.3 4.6z" fill="#fff"/>
<text x="1740.6" y="65.1" font-size="9.5" textLength="98.7" lengthAdjust="spacingAndGlyphs" fill="#f4f4f4" stroke="#f4f4f4" stroke-width="0.3">Direct Display Control</text>
<path d="M1847.2 68.2h8.6l-4.3 4.6z" fill="#fff"/>
<path d="M1912.3 68l6.2-5v10z" fill="#fff"/>
<g transform="translate(1885,68)" fill="#d6d6d6"><rect x="-1.05" y="-6.7" width="2.1" height="2.6" transform="rotate(0)"/><rect x="-1.05" y="-6.7" width="2.1" height="2.6" transform="rotate(45)"/><rect x="-1.05" y="-6.7" width="2.1" height="2.6" transform="rotate(90)"/><rect x="-1.05" y="-6.7" width="2.1" height="2.6" transform="rotate(135)"/><rect x="-1.05" y="-6.7" width="2.1" height="2.6" transform="rotate(180)"/><rect x="-1.05" y="-6.7" width="2.1" height="2.6" transform="rotate(225)"/><rect x="-1.05" y="-6.7" width="2.1" height="2.6" transform="rotate(270)"/><rect x="-1.05" y="-6.7" width="2.1" height="2.6" transform="rotate(315)"/></g>
<circle cx="1885" cy="68" r="3.7" fill="none" stroke="#d6d6d6" stroke-width="1.5"/>
<text x="213.8" y="160.7" font-size="39.6" textLength="173.7" lengthAdjust="spacingAndGlyphs" fill="#f2f2f2" stroke="#f2f2f2" stroke-width="0.6">Grayscale</text>
<text x="320" y="203.5" font-size="29.2" textLength="233.8" lengthAdjust="spacingAndGlyphs" fill="#f2f2f2" stroke="#f2f2f2" stroke-width="0.45">dE Average: 2,01</text>
<text x="836" y="146.9" font-size="29.2" textLength="265.5" lengthAdjust="spacingAndGlyphs" fill="#f2f2f2" stroke="#f2f2f2" stroke-width="0.45">Total Gamma: 2,38</text>
<text x="1478.3" y="146.9" font-size="29.2" textLength="200.5" lengthAdjust="spacingAndGlyphs" fill="#f2f2f2" stroke="#f2f2f2" stroke-width="0.45">CCT Avg: 6316</text>
<text x="389.3" y="241.3" font-size="14.6" textLength="82.5" lengthAdjust="spacingAndGlyphs" fill="#e0e0e0" stroke="#e0e0e0" stroke-width="0.25">DeltaE 2000</text>
<text x="918.8" y="184.6" font-size="14.6" textLength="86.5" lengthAdjust="spacingAndGlyphs" fill="#e0e0e0" stroke="#e0e0e0" stroke-width="0.25">RGB Balance</text>
<text x="1514.5" y="184.6" font-size="14.6" textLength="113.7" lengthAdjust="spacingAndGlyphs" fill="#e0e0e0" stroke="#e0e0e0" stroke-width="0.25">Gamma Log/Log</text>
<rect x="235.4" y="246.7" width="415.20000000000005" height="289.2" fill="#222"/>
<path d="M290.8 246.7V535.9" stroke="#949494" stroke-width="1.2"/>
<path d="M346.1 246.7V535.9" stroke="#949494" stroke-width="1.2"/>
<path d="M401.5 246.7V535.9" stroke="#949494" stroke-width="1.2"/>
<path d="M456.8 246.7V535.9" stroke="#949494" stroke-width="1.2"/>
<path d="M512.2 246.7V535.9" stroke="#949494" stroke-width="1.2"/>
<path d="M567.6 246.7V535.9" stroke="#949494" stroke-width="1.2"/>
<path d="M622.9 246.7V535.9" stroke="#949494" stroke-width="1.2"/>
<rect x="235.7" y="249.6" width="42.9" height="20.4" fill="url(#bg100)" stroke="#000" stroke-width="1.5"/>
<text x="234.3" y="266.4" font-size="15.0" text-anchor="end" textLength="24.5" lengthAdjust="spacingAndGlyphs" fill="#dcdcdc" stroke="#dcdcdc" stroke-width="0.3">100</text>
<rect x="235.7" y="275.9" width="67.0" height="20.4" fill="url(#bg90)" stroke="#000" stroke-width="1.5"/>
<text x="234.3" y="292.7" font-size="15.0" text-anchor="end" textLength="16.3" lengthAdjust="spacingAndGlyphs" fill="#dcdcdc" stroke="#dcdcdc" stroke-width="0.3">90</text>
<rect x="235.7" y="302.2" width="73.0" height="20.4" fill="url(#bg80)" stroke="#000" stroke-width="1.5"/>
<text x="234.3" y="319.0" font-size="15.0" text-anchor="end" textLength="16.3" lengthAdjust="spacingAndGlyphs" fill="#dcdcdc" stroke="#dcdcdc" stroke-width="0.3">80</text>
<rect x="235.7" y="328.5" width="74.7" height="20.4" fill="url(#bg70)" stroke="#000" stroke-width="1.5"/>
<text x="234.3" y="345.3" font-size="15.0" text-anchor="end" textLength="16.3" lengthAdjust="spacingAndGlyphs" fill="#dcdcdc" stroke="#dcdcdc" stroke-width="0.3">70</text>
<rect x="235.7" y="354.8" width="73.0" height="20.4" fill="url(#bg60)" stroke="#000" stroke-width="1.5"/>
<text x="234.3" y="371.6" font-size="15.0" text-anchor="end" textLength="16.3" lengthAdjust="spacingAndGlyphs" fill="#dcdcdc" stroke="#dcdcdc" stroke-width="0.3">60</text>
<rect x="235.7" y="381.1" width="67.0" height="20.4" fill="url(#bg50)" stroke="#000" stroke-width="1.5"/>
<text x="234.3" y="397.9" font-size="15.0" text-anchor="end" textLength="16.3" lengthAdjust="spacingAndGlyphs" fill="#dcdcdc" stroke="#dcdcdc" stroke-width="0.3">50</text>
<rect x="235.7" y="407.4" width="57.4" height="20.4" fill="url(#bg40)" stroke="#000" stroke-width="1.5"/>
<text x="234.3" y="424.2" font-size="15.0" text-anchor="end" textLength="16.3" lengthAdjust="spacingAndGlyphs" fill="#dcdcdc" stroke="#dcdcdc" stroke-width="0.3">40</text>
<rect x="235.7" y="433.7" width="42.4" height="20.4" fill="url(#bg30)" stroke="#000" stroke-width="1.5"/>
<text x="234.3" y="450.5" font-size="15.0" text-anchor="end" textLength="16.3" lengthAdjust="spacingAndGlyphs" fill="#dcdcdc" stroke="#dcdcdc" stroke-width="0.3">30</text>
<rect x="235.7" y="460.0" width="24.2" height="20.4" fill="url(#bg20)" stroke="#000" stroke-width="1.5"/>
<text x="234.3" y="476.8" font-size="15.0" text-anchor="end" textLength="16.3" lengthAdjust="spacingAndGlyphs" fill="#dcdcdc" stroke="#dcdcdc" stroke-width="0.3">20</text>
<rect x="235.7" y="486.3" width="25.0" height="20.4" fill="url(#bg10)" stroke="#000" stroke-width="1.5"/>
<text x="234.3" y="503.1" font-size="15.0" text-anchor="end" textLength="16.3" lengthAdjust="spacingAndGlyphs" fill="#dcdcdc" stroke="#dcdcdc" stroke-width="0.3">10</text>
<rect x="235.7" y="512.6" width="52.2" height="20.4" fill="url(#bg0)" stroke="#000" stroke-width="1.5"/>
<text x="234.3" y="529.4" font-size="15.0" text-anchor="end" textLength="8.2" lengthAdjust="spacingAndGlyphs" fill="#dcdcdc" stroke="#dcdcdc" stroke-width="0.3">0</text>
<path d="M229 246.7H235.4" stroke="#d4d4d4" stroke-width="1.6"/>
<path d="M229 273.0H235.4" stroke="#d4d4d4" stroke-width="1.6"/>
<path d="M229 299.3H235.4" stroke="#d4d4d4" stroke-width="1.6"/>
<path d="M229 325.6H235.4" stroke="#d4d4d4" stroke-width="1.6"/>
<path d="M229 351.9H235.4" stroke="#d4d4d4" stroke-width="1.6"/>
<path d="M229 378.2H235.4" stroke="#d4d4d4" stroke-width="1.6"/>
<path d="M229 404.4H235.4" stroke="#d4d4d4" stroke-width="1.6"/>
<path d="M229 430.7H235.4" stroke="#d4d4d4" stroke-width="1.6"/>
<path d="M229 457.0H235.4" stroke="#d4d4d4" stroke-width="1.6"/>
<path d="M229 483.3H235.4" stroke="#d4d4d4" stroke-width="1.6"/>
<path d="M229 509.6H235.4" stroke="#d4d4d4" stroke-width="1.6"/>
<path d="M229 535.9H235.4" stroke="#d4d4d4" stroke-width="1.6"/>
<path d="M263.1 246.7V535.9" stroke="#0c8c0c" stroke-width="2"/>
<path d="M318.4 246.7V535.9" stroke="#d6d63c" stroke-width="2"/>
<path d="M512.2 246.7V535.9" stroke="#c82828" stroke-width="2"/>
<rect x="235.4" y="246.7" width="415.20000000000005" height="289.2" fill="none" stroke="#a4a4a4" stroke-width="1.7"/>
<path d="M235.4 535.9v6.8" stroke="#d4d4d4" stroke-width="1.7"/>
<text x="235.0" y="557.9" font-size="15.0" text-anchor="middle" textLength="8.3" lengthAdjust="spacingAndGlyphs" fill="#dcdcdc" stroke="#dcdcdc" stroke-width="0.3">0</text>
<path d="M290.8 535.9v6.8" stroke="#d4d4d4" stroke-width="1.7"/>
<text x="290.4" y="557.9" font-size="15.0" text-anchor="middle" textLength="8.3" lengthAdjust="spacingAndGlyphs" fill="#dcdcdc" stroke="#dcdcdc" stroke-width="0.3">2</text>
<path d="M346.1 535.9v6.8" stroke="#d4d4d4" stroke-width="1.7"/>
<text x="345.7" y="557.9" font-size="15.0" text-anchor="middle" textLength="8.3" lengthAdjust="spacingAndGlyphs" fill="#dcdcdc" stroke="#dcdcdc" stroke-width="0.3">4</text>
<path d="M401.5 535.9v6.8" stroke="#d4d4d4" stroke-width="1.7"/>
<text x="401.1" y="557.9" font-size="15.0" text-anchor="middle" textLength="8.3" lengthAdjust="spacingAndGlyphs" fill="#dcdcdc" stroke="#dcdcdc" stroke-width="0.3">6</text>
<path d="M456.8 535.9v6.8" stroke="#d4d4d4" stroke-width="1.7"/>
<text x="456.4" y="557.9" font-size="15.0" text-anchor="middle" textLength="8.3" lengthAdjust="spacingAndGlyphs" fill="#dcdcdc" stroke="#dcdcdc" stroke-width="0.3">8</text>
<path d="M512.2 535.9v6.8" stroke="#d4d4d4" stroke-width="1.7"/>
<text x="511.8" y="557.9" font-size="15.0" text-anchor="middle" textLength="16.6" lengthAdjust="spacingAndGlyphs" fill="#dcdcdc" stroke="#dcdcdc" stroke-width="0.3">10</text>
<path d="M567.6 535.9v6.8" stroke="#d4d4d4" stroke-width="1.7"/>
<text x="567.2" y="557.9" font-size="15.0" text-anchor="middle" textLength="16.6" lengthAdjust="spacingAndGlyphs" fill="#dcdcdc" stroke="#dcdcdc" stroke-width="0.3">12</text>
<path d="M622.9 535.9v6.8" stroke="#d4d4d4" stroke-width="1.7"/>
<text x="622.5" y="557.9" font-size="15.0" text-anchor="middle" textLength="16.6" lengthAdjust="spacingAndGlyphs" fill="#dcdcdc" stroke="#dcdcdc" stroke-width="0.3">14</text>
<rect x="708.6" y="191.3" width="536.8000000000001" height="344.7" fill="#222"/>
<path d="M702.4 536.0h6.2" stroke="#d4d4d4" stroke-width="1.6"/>
<text x="701.8" y="543.2" font-size="15.0" text-anchor="end" textLength="16.3" lengthAdjust="spacingAndGlyphs" fill="#dcdcdc" stroke="#dcdcdc" stroke-width="0.3">80</text>
<path d="M708.6 493.6H1245.4" stroke="#949494" stroke-width="1.2"/>
<path d="M702.4 493.6h6.2" stroke="#d4d4d4" stroke-width="1.6"/>
<text x="701.8" y="498.8" font-size="15.0" text-anchor="end" textLength="16.3" lengthAdjust="spacingAndGlyphs" fill="#dcdcdc" stroke="#dcdcdc" stroke-width="0.3">85</text>
<path d="M708.6 451.8H1245.4" stroke="#949494" stroke-width="1.2"/>
<path d="M702.4 451.8h6.2" stroke="#d4d4d4" stroke-width="1.6"/>
<text x="701.8" y="456.9" font-size="15.0" text-anchor="end" textLength="16.3" lengthAdjust="spacingAndGlyphs" fill="#dcdcdc" stroke="#dcdcdc" stroke-width="0.3">90</text>
<path d="M708.6 407.2H1245.4" stroke="#949494" stroke-width="1.2"/>
<path d="M702.4 407.2h6.2" stroke="#d4d4d4" stroke-width="1.6"/>
<text x="701.8" y="412.4" font-size="15.0" text-anchor="end" textLength="16.3" lengthAdjust="spacingAndGlyphs" fill="#dcdcdc" stroke="#dcdcdc" stroke-width="0.3">95</text>
<path d="M708.6 364.6H1245.4" stroke="#949494" stroke-width="1.2"/>
<path d="M702.4 364.6h6.2" stroke="#d4d4d4" stroke-width="1.6"/>
<text x="701.8" y="369.8" font-size="15.0" text-anchor="end" textLength="24.5" lengthAdjust="spacingAndGlyphs" fill="#dcdcdc" stroke="#dcdcdc" stroke-width="0.3">100</text>
<path d="M708.6 320.2H1245.4" stroke="#949494" stroke-width="1.2"/>
<path d="M702.4 320.2h6.2" stroke="#d4d4d4" stroke-width="1.6"/>
<text x="701.8" y="325.4" font-size="15.0" text-anchor="end" textLength="24.5" lengthAdjust="spacingAndGlyphs" fill="#dcdcdc" stroke="#dcdcdc" stroke-width="0.3">105</text>
<path d="M708.6 278.6H1245.4" stroke="#949494" stroke-width="1.2"/>
<path d="M702.4 278.6h6.2" stroke="#d4d4d4" stroke-width="1.6"/>
<text x="701.8" y="283.8" font-size="15.0" text-anchor="end" textLength="24.5" lengthAdjust="spacingAndGlyphs" fill="#dcdcdc" stroke="#dcdcdc" stroke-width="0.3">110</text>
<path d="M708.6 234.1H1245.4" stroke="#949494" stroke-width="1.2"/>
<path d="M702.4 234.1h6.2" stroke="#d4d4d4" stroke-width="1.6"/>
<text x="701.8" y="239.2" font-size="15.0" text-anchor="end" textLength="24.5" lengthAdjust="spacingAndGlyphs" fill="#dcdcdc" stroke="#dcdcdc" stroke-width="0.3">115</text>
<path d="M702.4 191.3h6.2" stroke="#d4d4d4" stroke-width="1.6"/>
<text x="701.8" y="196.5" font-size="15.0" text-anchor="end" textLength="24.5" lengthAdjust="spacingAndGlyphs" fill="#dcdcdc" stroke="#dcdcdc" stroke-width="0.3">120</text>
<clipPath id="cp2"><rect x="708.6" y="191.3" width="536.8000000000001" height="344.7"/></clipPath><g clip-path="url(#cp2)">
<polyline points="708.6,340.6 762.3,365.0 816.0,364.6 869.6,360.6 923.3,357.1 977.0,356.0 1030.7,356.0 1084.4,357.9 1138.0,360.9 1191.7,363.9 1245.4,365.9" fill="none" stroke="#e81616" stroke-width="3.2" stroke-linejoin="round" stroke-linecap="butt"/>
<polyline points="708.6,343.3 762.3,369.7 816.0,365.5 869.6,359.3 923.3,355.7 977.0,354.8 1030.7,354.8 1084.4,356.6 1138.0,358.4 1191.7,360.2 1245.4,361.0" fill="none" stroke="#0f8a0f" stroke-width="3.2" stroke-linejoin="round" stroke-linecap="butt"/>
<polyline points="708.6,338.0 762.3,368.0 816.0,369.7 869.6,368.9 923.3,368.0 977.0,368.9 1030.7,369.7 1084.4,371.4 1138.0,373.1 1191.7,374.0 1245.4,367.2" fill="none" stroke="#1212e4" stroke-width="3.6" stroke-linejoin="round" stroke-linecap="butt"/>
</g>
<rect x="708.6" y="191.3" width="536.8000000000001" height="344.7" fill="none" stroke="#a4a4a4" stroke-width="1.7"/>
<path d="M708.6 536.0v6.8" stroke="#d4d4d4" stroke-width="1.7"/>
<text x="708.6" y="557.9" font-size="15.0" text-anchor="middle" textLength="8.3" lengthAdjust="spacingAndGlyphs" fill="#dcdcdc" stroke="#dcdcdc" stroke-width="0.3">0</text>
<path d="M762.3 536.0v6.8" stroke="#d4d4d4" stroke-width="1.7"/>
<text x="762.3" y="557.9" font-size="15.0" text-anchor="middle" textLength="16.6" lengthAdjust="spacingAndGlyphs" fill="#dcdcdc" stroke="#dcdcdc" stroke-width="0.3">10</text>
<path d="M816.0 536.0v6.8" stroke="#d4d4d4" stroke-width="1.7"/>
<text x="816.0" y="557.9" font-size="15.0" text-anchor="middle" textLength="16.6" lengthAdjust="spacingAndGlyphs" fill="#dcdcdc" stroke="#dcdcdc" stroke-width="0.3">20</text>
<path d="M869.6 536.0v6.8" stroke="#d4d4d4" stroke-width="1.7"/>
<text x="869.6" y="557.9" font-size="15.0" text-anchor="middle" textLength="16.6" lengthAdjust="spacingAndGlyphs" fill="#dcdcdc" stroke="#dcdcdc" stroke-width="0.3">30</text>
<path d="M923.3 536.0v6.8" stroke="#d4d4d4" stroke-width="1.7"/>
<text x="923.3" y="557.9" font-size="15.0" text-anchor="middle" textLength="16.6" lengthAdjust="spacingAndGlyphs" fill="#dcdcdc" stroke="#dcdcdc" stroke-width="0.3">40</text>
<path d="M977.0 536.0v6.8" stroke="#d4d4d4" stroke-width="1.7"/>
<text x="977.0" y="557.9" font-size="15.0" text-anchor="middle" textLength="16.6" lengthAdjust="spacingAndGlyphs" fill="#dcdcdc" stroke="#dcdcdc" stroke-width="0.3">50</text>
<path d="M1030.7 536.0v6.8" stroke="#d4d4d4" stroke-width="1.7"/>
<text x="1030.7" y="557.9" font-size="15.0" text-anchor="middle" textLength="16.6" lengthAdjust="spacingAndGlyphs" fill="#dcdcdc" stroke="#dcdcdc" stroke-width="0.3">60</text>
<path d="M1084.4 536.0v6.8" stroke="#d4d4d4" stroke-width="1.7"/>
<text x="1084.4" y="557.9" font-size="15.0" text-anchor="middle" textLength="16.6" lengthAdjust="spacingAndGlyphs" fill="#dcdcdc" stroke="#dcdcdc" stroke-width="0.3">70</text>
<path d="M1138.0 536.0v6.8" stroke="#d4d4d4" stroke-width="1.7"/>
<text x="1138.0" y="557.9" font-size="15.0" text-anchor="middle" textLength="16.6" lengthAdjust="spacingAndGlyphs" fill="#dcdcdc" stroke="#dcdcdc" stroke-width="0.3">80</text>
<path d="M1191.7 536.0v6.8" stroke="#d4d4d4" stroke-width="1.7"/>
<text x="1191.7" y="557.9" font-size="15.0" text-anchor="middle" textLength="16.6" lengthAdjust="spacingAndGlyphs" fill="#dcdcdc" stroke="#dcdcdc" stroke-width="0.3">90</text>
<path d="M1245.4 536.0v6.8" stroke="#d4d4d4" stroke-width="1.7"/>
<text x="1245.4" y="557.9" font-size="15.0" text-anchor="middle" textLength="24.9" lengthAdjust="spacingAndGlyphs" fill="#dcdcdc" stroke="#dcdcdc" stroke-width="0.3">100</text>
<rect x="1313.8" y="190.8" width="540.8" height="345.09999999999997" fill="#222"/>
<path d="M1313.8 531.9H1854.6" stroke="#949494" stroke-width="1.2"/>
<path d="M1308.0 531.9h5.800" stroke="#d4d4d4" stroke-width="1.600"/>
<text x="1307.4" y="537.1" font-size="15.0" text-anchor="end" fill="#dcdcdc" stroke="#dcdcdc" stroke-width="0.3">1</text>
<path d="M1313.8 488.3H1854.6" stroke="#949494" stroke-width="1.2"/>
<path d="M1308.0 488.3h5.800" stroke="#d4d4d4" stroke-width="1.600"/>
<text x="1307.4" y="493.5" font-size="15.0" text-anchor="end" fill="#dcdcdc" stroke="#dcdcdc" stroke-width="0.3">1,2</text>
<path d="M1313.8 445.1H1854.6" stroke="#949494" stroke-width="1.2"/>
<path d="M1308.0 445.1h5.800" stroke="#d4d4d4" stroke-width="1.600"/>
<text x="1307.4" y="450.3" font-size="15.0" text-anchor="end" fill="#dcdcdc" stroke="#dcdcdc" stroke-width="0.3">1,4</text>
<path d="M1313.8 403.3H1854.6" stroke="#949494" stroke-width="1.2"/>
<path d="M1308.0 403.3h5.800" stroke="#d4d4d4" stroke-width="1.600"/>
<text x="1307.4" y="408.5" font-size="15.0" text-anchor="end" fill="#dcdcdc" stroke="#dcdcdc" stroke-width="0.3">1,6</text>
<path d="M1313.8 358.7H1854.6" stroke="#949494" stroke-width="1.2"/>
<path d="M1308.0 358.7h5.800" stroke="#d4d4d4" stroke-width="1.600"/>
<text x="1307.4" y="363.9" font-size="15.0" text-anchor="end" fill="#dcdcdc" stroke="#dcdcdc" stroke-width="0.3">1,8</text>
<path d="M1313.8 316.9H1854.6" stroke="#949494" stroke-width="1.2"/>
<path d="M1308.0 316.9h5.800" stroke="#d4d4d4" stroke-width="1.600"/>
<text x="1307.4" y="322.1" font-size="15.0" text-anchor="end" fill="#dcdcdc" stroke="#dcdcdc" stroke-width="0.3">2</text>
<path d="M1313.8 272.4H1854.6" stroke="#949494" stroke-width="1.2"/>
<path d="M1308.0 272.4h5.800" stroke="#d4d4d4" stroke-width="1.600"/>
<text x="1307.4" y="277.6" font-size="15.0" text-anchor="end" fill="#dcdcdc" stroke="#dcdcdc" stroke-width="0.3">2,2</text>
<path d="M1313.8 229.9H1854.6" stroke="#949494" stroke-width="1.2"/>
<path d="M1308.0 229.9h5.800" stroke="#d4d4d4" stroke-width="1.600"/>
<text x="1307.4" y="235.1" font-size="15.0" text-anchor="end" fill="#dcdcdc" stroke="#dcdcdc" stroke-width="0.3">2,4</text>
<clipPath id="cp3"><rect x="1313.8" y="190.8" width="540.8" height="345.09999999999997"/></clipPath><g clip-path="url(#cp3)">
<polyline points="1313.8,468.9 1367.9,304.0 1422.0,283.7 1476.0,279.1 1530.1,276.8 1584.2,275.1 1638.3,273.5 1692.4,270.9 1746.4,266.2 1800.5,256.7 1854.6,254.6" fill="none" stroke="#8e8e8e" stroke-width="3.2" stroke-linejoin="round" stroke-linecap="butt"/>
<polyline points="1313.6,466.6 1315.3,439.5 1317.3,417.3 1319.2,403.8 1324.6,387.8 1330.8,368.0 1337.0,350.8 1344.4,338.5 1351.8,328.6 1359.2,321.2 1366.6,313.8 1373.9,308.4 1388.7,300.2 1406.0,293.6 1423.2,287.9 1447.9,281.3 1472.5,276.8 1497.2,273.4 1521.8,270.7 1546.5,268.7 1580.0,266.0 1638.3,262.0 1692.4,259.4 1746.4,257.7 1800.5,255.8 1854.6,254.6" fill="none" stroke="#f4f41e" stroke-width="3.2" stroke-linejoin="round" stroke-linecap="butt"/>
<polyline points="1800.5,256.7 1854.6,254.6" fill="none" stroke="#8e8e8e" stroke-width="3.2" stroke-linejoin="round" stroke-linecap="butt"/>
</g>
<rect x="1313.8" y="190.8" width="540.8" height="345.09999999999997" fill="none" stroke="#a4a4a4" stroke-width="1.7"/>
<path d="M1313.8 535.9v6.8" stroke="#d4d4d4" stroke-width="1.7"/>
<text x="1313.8" y="557.9" font-size="15.0" text-anchor="middle" textLength="8.3" lengthAdjust="spacingAndGlyphs" fill="#dcdcdc" stroke="#dcdcdc" stroke-width="0.3">0</text>
<path d="M1367.9 535.9v6.8" stroke="#d4d4d4" stroke-width="1.7"/>
<text x="1367.9" y="557.9" font-size="15.0" text-anchor="middle" textLength="16.6" lengthAdjust="spacingAndGlyphs" fill="#dcdcdc" stroke="#dcdcdc" stroke-width="0.3">10</text>
<path d="M1422.0 535.9v6.8" stroke="#d4d4d4" stroke-width="1.7"/>
<text x="1422.0" y="557.9" font-size="15.0" text-anchor="middle" textLength="16.6" lengthAdjust="spacingAndGlyphs" fill="#dcdcdc" stroke="#dcdcdc" stroke-width="0.3">20</text>
<path d="M1476.0 535.9v6.8" stroke="#d4d4d4" stroke-width="1.7"/>
<text x="1476.0" y="557.9" font-size="15.0" text-anchor="middle" textLength="16.6" lengthAdjust="spacingAndGlyphs" fill="#dcdcdc" stroke="#dcdcdc" stroke-width="0.3">30</text>
<path d="M1530.1 535.9v6.8" stroke="#d4d4d4" stroke-width="1.7"/>
<text x="1530.1" y="557.9" font-size="15.0" text-anchor="middle" textLength="16.6" lengthAdjust="spacingAndGlyphs" fill="#dcdcdc" stroke="#dcdcdc" stroke-width="0.3">40</text>
<path d="M1584.2 535.9v6.8" stroke="#d4d4d4" stroke-width="1.7"/>
<text x="1584.2" y="557.9" font-size="15.0" text-anchor="middle" textLength="16.6" lengthAdjust="spacingAndGlyphs" fill="#dcdcdc" stroke="#dcdcdc" stroke-width="0.3">50</text>
<path d="M1638.3 535.9v6.8" stroke="#d4d4d4" stroke-width="1.7"/>
<text x="1638.3" y="557.9" font-size="15.0" text-anchor="middle" textLength="16.6" lengthAdjust="spacingAndGlyphs" fill="#dcdcdc" stroke="#dcdcdc" stroke-width="0.3">60</text>
<path d="M1692.4 535.9v6.8" stroke="#d4d4d4" stroke-width="1.7"/>
<text x="1692.4" y="557.9" font-size="15.0" text-anchor="middle" textLength="16.6" lengthAdjust="spacingAndGlyphs" fill="#dcdcdc" stroke="#dcdcdc" stroke-width="0.3">70</text>
<path d="M1746.4 535.9v6.8" stroke="#d4d4d4" stroke-width="1.7"/>
<text x="1746.4" y="557.9" font-size="15.0" text-anchor="middle" textLength="16.6" lengthAdjust="spacingAndGlyphs" fill="#dcdcdc" stroke="#dcdcdc" stroke-width="0.3">80</text>
<path d="M1800.5 535.9v6.8" stroke="#d4d4d4" stroke-width="1.7"/>
<text x="1800.5" y="557.9" font-size="15.0" text-anchor="middle" textLength="16.6" lengthAdjust="spacingAndGlyphs" fill="#dcdcdc" stroke="#dcdcdc" stroke-width="0.3">90</text>
<path d="M1854.6 535.9v6.8" stroke="#d4d4d4" stroke-width="1.7"/>
<text x="1854.6" y="557.9" font-size="15.0" text-anchor="middle" textLength="24.9" lengthAdjust="spacingAndGlyphs" fill="#dcdcdc" stroke="#dcdcdc" stroke-width="0.3">100</text>
<rect x="444.6" y="611" width="1330" height="114" fill="#050505"/>
<rect x="466.5" y="616.5" width="101.9" height="36.3" fill="#0a0a0c" stroke="#efefef" stroke-width="1.5"/>
<rect x="466.5" y="664.7" width="101.9" height="35.4" fill="#000000" stroke="#efefef" stroke-width="1.5"/>
<text x="517.4" y="716.0" font-size="12.4" text-anchor="middle" textLength="7" lengthAdjust="spacingAndGlyphs" fill="#f0f0f0">0</text>
<rect x="586.4" y="616.5" width="101.9" height="36.3" fill="#1a1a1a" stroke="#efefef" stroke-width="1.5"/>
<rect x="586.4" y="664.7" width="101.9" height="35.4" fill="#1c1c1c" stroke="#efefef" stroke-width="1.5"/>
<text x="637.2" y="716.0" font-size="12.4" text-anchor="middle" textLength="14.2" lengthAdjust="spacingAndGlyphs" fill="#f0f0f0">10</text>
<rect x="706.2" y="616.5" width="101.9" height="36.3" fill="#333333" stroke="#efefef" stroke-width="1.5"/>
<rect x="706.2" y="664.7" width="101.9" height="35.4" fill="#363636" stroke="#efefef" stroke-width="1.5"/>
<text x="757.1" y="716.0" font-size="12.4" text-anchor="middle" textLength="14.2" lengthAdjust="spacingAndGlyphs" fill="#f0f0f0">20</text>
<rect x="826.0" y="616.5" width="101.9" height="36.3" fill="#4f4f4d" stroke="#efefef" stroke-width="1.5"/>
<rect x="826.0" y="664.7" width="101.9" height="35.4" fill="#4f4f4f" stroke="#efefef" stroke-width="1.5"/>
<text x="876.9" y="716.0" font-size="12.4" text-anchor="middle" textLength="14.2" lengthAdjust="spacingAndGlyphs" fill="#f0f0f0">30</text>
<rect x="945.9" y="616.5" width="101.9" height="36.3" fill="#696965" stroke="#efefef" stroke-width="1.5"/>
<rect x="945.9" y="664.7" width="101.9" height="35.4" fill="#696969" stroke="#efefef" stroke-width="1.5"/>
<text x="996.8" y="716.0" font-size="12.4" text-anchor="middle" textLength="14.2" lengthAdjust="spacingAndGlyphs" fill="#f0f0f0">40</text>
<rect x="1065.8" y="616.5" width="101.9" height="36.3" fill="#83837e" stroke="#efefef" stroke-width="1.5"/>
<rect x="1065.8" y="664.7" width="101.9" height="35.4" fill="#828282" stroke="#efefef" stroke-width="1.5"/>
<text x="1116.6" y="716.0" font-size="12.4" text-anchor="middle" textLength="14.2" lengthAdjust="spacingAndGlyphs" fill="#f0f0f0">50</text>
<rect x="1185.6" y="616.5" width="101.9" height="36.3" fill="#9c9c97" stroke="#efefef" stroke-width="1.5"/>
<rect x="1185.6" y="664.7" width="101.9" height="35.4" fill="#9b9b9b" stroke="#efefef" stroke-width="1.5"/>
<text x="1236.5" y="716.0" font-size="12.4" text-anchor="middle" textLength="14.2" lengthAdjust="spacingAndGlyphs" fill="#f0f0f0">60</text>
<rect x="1305.5" y="616.5" width="101.9" height="36.3" fill="#b5b5b0" stroke="#efefef" stroke-width="1.5"/>
<rect x="1305.5" y="664.7" width="101.9" height="35.4" fill="#b4b4b4" stroke="#efefef" stroke-width="1.5"/>
<text x="1356.3" y="716.0" font-size="12.4" text-anchor="middle" textLength="14.2" lengthAdjust="spacingAndGlyphs" fill="#f0f0f0">70</text>
<rect x="1425.3" y="616.5" width="101.9" height="36.3" fill="#cdcdc8" stroke="#efefef" stroke-width="1.5"/>
<rect x="1425.3" y="664.7" width="101.9" height="35.4" fill="#cdcdcd" stroke="#efefef" stroke-width="1.5"/>
<text x="1476.2" y="716.0" font-size="12.4" text-anchor="middle" textLength="14.2" lengthAdjust="spacingAndGlyphs" fill="#f0f0f0">80</text>
<rect x="1545.1" y="616.5" width="101.9" height="36.3" fill="#e6e6e2" stroke="#efefef" stroke-width="1.5"/>
<rect x="1545.1" y="664.7" width="101.9" height="35.4" fill="#e6e6e6" stroke="#efefef" stroke-width="1.5"/>
<text x="1596.0" y="716.0" font-size="12.4" text-anchor="middle" textLength="14.2" lengthAdjust="spacingAndGlyphs" fill="#f0f0f0">90</text>
<rect x="1665.0" y="616.5" width="101.9" height="36.3" fill="#ffffff" stroke="#efefef" stroke-width="1.5"/>
<rect x="1665.0" y="664.7" width="101.9" height="35.4" fill="#ffffff" stroke="#efefef" stroke-width="1.5"/>
<text x="1715.9" y="716.0" font-size="12.4" text-anchor="middle" textLength="20.9" lengthAdjust="spacingAndGlyphs" fill="#f0f0f0">100</text>
<text transform="translate(458.3,634.6) rotate(-90)" font-size="12" text-anchor="middle" textLength="36" lengthAdjust="spacingAndGlyphs" fill="#f0f0f0">Actual</text>
<text transform="translate(458.3,682.6) rotate(-90)" font-size="12" text-anchor="middle" textLength="35.5" lengthAdjust="spacingAndGlyphs" fill="#f0f0f0">Target</text>
<text x="204.1" y="771.0" font-size="29.2" textLength="227" lengthAdjust="spacingAndGlyphs" fill="#f2f2f2" stroke="#f2f2f2" stroke-width="0.45">Current Reading</text>
<text x="204.1" y="815.3" font-size="25.6" textLength="106.4" lengthAdjust="spacingAndGlyphs" fill="#f2f2f2" stroke="#f2f2f2" stroke-width="0.4">x: 0,3128</text>
<text x="204.1" y="858.4" font-size="25.6" textLength="91.7" lengthAdjust="spacingAndGlyphs" fill="#f2f2f2" stroke="#f2f2f2" stroke-width="0.4">y: 0,331</text>
<text x="204.1" y="900.6" font-size="25.6" textLength="115.1" lengthAdjust="spacingAndGlyphs" fill="#f2f2f2" stroke="#f2f2f2" stroke-width="0.4">fL: 43,158</text>
<text x="204.1" y="943.8" font-size="25.6" textLength="179.7" lengthAdjust="spacingAndGlyphs" fill="#f2f2f2" stroke="#f2f2f2" stroke-width="0.4">cd/m²: 147,872</text>
<clipPath id="cpc"><rect x="575.7" y="750.0" width="248.29999999999995" height="178.5"/></clipPath>
<g clip-path="url(#cpc)"><g filter="url(#hb)">
<rect x="557.08" y="748.0" width="6.81" height="182.5" fill="url(#cg0)"/>
<rect x="563.29" y="748.0" width="6.81" height="182.5" fill="url(#cg1)"/>
<rect x="569.49" y="748.0" width="6.81" height="182.5" fill="url(#cg2)"/>
<rect x="575.70" y="748.0" width="6.81" height="182.5" fill="url(#cg3)"/>
<rect x="581.91" y="748.0" width="6.81" height="182.5" fill="url(#cg4)"/>
<rect x="588.12" y="748.0" width="6.81" height="182.5" fill="url(#cg5)"/>
<rect x="594.32" y="748.0" width="6.81" height="182.5" fill="url(#cg6)"/>
<rect x="600.53" y="748.0" width="6.81" height="182.5" fill="url(#cg7)"/>
<rect x="606.74" y="748.0" width="6.81" height="182.5" fill="url(#cg8)"/>
<rect x="612.95" y="748.0" width="6.81" height="182.5" fill="url(#cg9)"/>
<rect x="619.15" y="748.0" width="6.81" height="182.5" fill="url(#cg10)"/>
<rect x="625.36" y="748.0" width="6.81" height="182.5" fill="url(#cg11)"/>
<rect x="631.57" y="748.0" width="6.81" height="182.5" fill="url(#cg12)"/>
<rect x="637.78" y="748.0" width="6.81" height="182.5" fill="url(#cg13)"/>
<rect x="643.98" y="748.0" width="6.81" height="182.5" fill="url(#cg14)"/>
<rect x="650.19" y="748.0" width="6.81" height="182.5" fill="url(#cg15)"/>
<rect x="656.40" y="748.0" width="6.81" height="182.5" fill="url(#cg16)"/>
<rect x="662.61" y="748.0" width="6.81" height="182.5" fill="url(#cg17)"/>
<rect x="668.81" y="748.0" width="6.81" height="182.5" fill="url(#cg18)"/>
<rect x="675.02" y="748.0" width="6.81" height="182.5" fill="url(#cg19)"/>
<rect x="681.23" y="748.0" width="6.81" height="182.5" fill="url(#cg20)"/>
<rect x="687.44" y="748.0" width="6.81" height="182.5" fill="url(#cg21)"/>
<rect x="693.64" y="748.0" width="6.81" height="182.5" fill="url(#cg22)"/>
<rect x="699.85" y="748.0" width="6.81" height="182.5" fill="url(#cg23)"/>
<rect x="706.06" y="748.0" width="6.81" height="182.5" fill="url(#cg24)"/>
<rect x="712.26" y="748.0" width="6.81" height="182.5" fill="url(#cg25)"/>
<rect x="718.47" y="748.0" width="6.81" height="182.5" fill="url(#cg26)"/>
<rect x="724.68" y="748.0" width="6.81" height="182.5" fill="url(#cg27)"/>
<rect x="730.89" y="748.0" width="6.81" height="182.5" fill="url(#cg28)"/>
<rect x="737.10" y="748.0" width="6.81" height="182.5" fill="url(#cg29)"/>
<rect x="743.30" y="748.0" width="6.81" height="182.5" fill="url(#cg30)"/>
<rect x="749.51" y="748.0" width="6.81" height="182.5" fill="url(#cg31)"/>
<rect x="755.72" y="748.0" width="6.81" height="182.5" fill="url(#cg32)"/>
<rect x="761.92" y="748.0" width="6.81" height="182.5" fill="url(#cg33)"/>
<rect x="768.13" y="748.0" width="6.81" height="182.5" fill="url(#cg34)"/>
<rect x="774.34" y="748.0" width="6.81" height="182.5" fill="url(#cg35)"/>
<rect x="780.55" y="748.0" width="6.81" height="182.5" fill="url(#cg36)"/>
<rect x="786.75" y="748.0" width="6.81" height="182.5" fill="url(#cg37)"/>
<rect x="792.96" y="748.0" width="6.81" height="182.5" fill="url(#cg38)"/>
<rect x="799.17" y="748.0" width="6.81" height="182.5" fill="url(#cg39)"/>
<rect x="805.38" y="748.0" width="6.81" height="182.5" fill="url(#cg40)"/>
<rect x="811.59" y="748.0" width="6.81" height="182.5" fill="url(#cg41)"/>
<rect x="817.79" y="748.0" width="6.81" height="182.5" fill="url(#cg42)"/>
<rect x="824.00" y="748.0" width="6.81" height="182.5" fill="url(#cg43)"/>
<rect x="830.21" y="748.0" width="6.81" height="182.5" fill="url(#cg44)"/>
<rect x="836.41" y="748.0" width="6.81" height="182.5" fill="url(#cg45)"/>
</g></g>
<rect x="575.7" y="750.0" width="248.29999999999995" height="178.5" fill="none" stroke="#8a8a8a" stroke-opacity="0.55" stroke-width="1.5"/>
<path clip-path="url(#cpc)" d="M607.6 930 Q 701 853.7 826 778.2" fill="none" stroke="#0a0a0a" stroke-width="3.2"/>
<path d="M570 907.0H575.7" stroke="#ccc" stroke-width="1.3"/>
<text x="568.7" y="912.0" font-size="14.2" text-anchor="end" textLength="28.9" lengthAdjust="spacingAndGlyphs" fill="#e0e0e0">0,31</text>
<path d="M570 871.2H575.7" stroke="#ccc" stroke-width="1.3"/>
<text x="568.7" y="876.2" font-size="14.2" text-anchor="end" textLength="28.9" lengthAdjust="spacingAndGlyphs" fill="#e0e0e0">0,32</text>
<path d="M570 835.4H575.7" stroke="#ccc" stroke-width="1.3"/>
<text x="568.7" y="840.4" font-size="14.2" text-anchor="end" textLength="28.9" lengthAdjust="spacingAndGlyphs" fill="#e0e0e0">0,33</text>
<path d="M570 799.7H575.7" stroke="#ccc" stroke-width="1.3"/>
<text x="568.7" y="804.7" font-size="14.2" text-anchor="end" textLength="28.9" lengthAdjust="spacingAndGlyphs" fill="#e0e0e0">0,34</text>
<path d="M570 763.9H575.7" stroke="#ccc" stroke-width="1.3"/>
<text x="568.7" y="768.9" font-size="14.2" text-anchor="end" textLength="28.9" lengthAdjust="spacingAndGlyphs" fill="#e0e0e0">0,35</text>
<path d="M585.6 928.5v6" stroke="#ccc" stroke-width="1.3"/>
<text x="585.6" y="950.6" font-size="14.2" text-anchor="middle" textLength="29.4" lengthAdjust="spacingAndGlyphs" fill="#e0e0e0">0,29</text>
<path d="M635.4 928.5v6" stroke="#ccc" stroke-width="1.3"/>
<text x="635.4" y="950.6" font-size="14.2" text-anchor="middle" textLength="20.8" lengthAdjust="spacingAndGlyphs" fill="#e0e0e0">0,3</text>
<path d="M685.1 928.5v6" stroke="#ccc" stroke-width="1.3"/>
<text x="685.1" y="950.6" font-size="14.2" text-anchor="middle" textLength="29.4" lengthAdjust="spacingAndGlyphs" fill="#e0e0e0">0,31</text>
<path d="M734.9 928.5v6" stroke="#ccc" stroke-width="1.3"/>
<text x="734.9" y="950.6" font-size="14.2" text-anchor="middle" textLength="29.4" lengthAdjust="spacingAndGlyphs" fill="#e0e0e0">0,32</text>
<path d="M784.6 928.5v6" stroke="#ccc" stroke-width="1.3"/>
<text x="784.6" y="950.6" font-size="14.2" text-anchor="middle" textLength="29.4" lengthAdjust="spacingAndGlyphs" fill="#e0e0e0">0,33</text>
<rect x="692.3" y="831.8" width="14" height="14" fill="#fff" stroke="#0a0a0a" stroke-width="1.5"/>
<circle cx="705" cy="850.1" r="4.4" fill="#1c1c1c" stroke="#1a1a1a" stroke-width="1"/>
<circle cx="717.8" cy="820.6" r="4.4" fill="#3c3c3c" stroke="#1a1a1a" stroke-width="1"/>
<circle cx="720.4" cy="812.6" r="4.4" fill="#333" stroke="#1a1a1a" stroke-width="1"/>
<circle cx="719.6" cy="813.4" r="4.4" fill="#555" stroke="#1a1a1a" stroke-width="1"/>
<circle cx="718.6" cy="814.4" r="4.4" fill="#777" stroke="#1a1a1a" stroke-width="1"/>
<circle cx="717.4" cy="815.6" r="4.4" fill="#959595" stroke="#1a1a1a" stroke-width="1"/>
<circle cx="716" cy="816.8" r="4.4" fill="#adadad" stroke="#1a1a1a" stroke-width="1"/>
<circle cx="714.4" cy="818.0" r="4.4" fill="#c2c2c2" stroke="#1a1a1a" stroke-width="1"/>
<circle cx="712.6" cy="819.4" r="4.4" fill="#d2d2d2" stroke="#1a1a1a" stroke-width="1"/>
<circle cx="710.4" cy="821.0" r="4.4" fill="#e2e2e2" stroke="#1a1a1a" stroke-width="1"/>
<circle cx="698.9" cy="831.9" r="4.4" fill="#fff" stroke="#1a1a1a" stroke-width="1"/>
<text x="1036.8" y="760.3" font-size="14.4" text-anchor="end" textLength="8.7" lengthAdjust="spacingAndGlyphs" fill="#f4f4f4">0</text>
<text x="1112.9" y="760.3" font-size="14.4" text-anchor="end" textLength="17.5" lengthAdjust="spacingAndGlyphs" fill="#f4f4f4">10</text>
<text x="1179.7" y="760.3" font-size="14.4" text-anchor="end" textLength="17.5" lengthAdjust="spacingAndGlyphs" fill="#f4f4f4">20</text>
<text x="1247" y="760.3" font-size="14.4" text-anchor="end" textLength="17.5" lengthAdjust="spacingAndGlyphs" fill="#f4f4f4">30</text>
<text x="1314.4" y="760.3" font-size="14.4" text-anchor="end" textLength="17.5" lengthAdjust="spacingAndGlyphs" fill="#f4f4f4">40</text>
<text x="1381.7" y="760.3" font-size="14.4" text-anchor="end" textLength="17.5" lengthAdjust="spacingAndGlyphs" fill="#f4f4f4">50</text>
<text x="1448.6" y="760.3" font-size="14.4" text-anchor="end" textLength="17.5" lengthAdjust="spacingAndGlyphs" fill="#f4f4f4">60</text>
<text x="1515.9" y="760.3" font-size="14.4" text-anchor="end" textLength="17.5" lengthAdjust="spacingAndGlyphs" fill="#f4f4f4">70</text>
<text x="1583.2" y="760.3" font-size="14.4" text-anchor="end" textLength="17.5" lengthAdjust="spacingAndGlyphs" fill="#f4f4f4">80</text>
<text x="1650" y="760.3" font-size="14.4" text-anchor="end" textLength="17.5" lengthAdjust="spacingAndGlyphs" fill="#f4f4f4">90</text>
<text x="1722.2" y="760.3" font-size="14.4" text-anchor="end" textLength="26.2" lengthAdjust="spacingAndGlyphs" fill="#f4f4f4">100</text>
<text x="848.4" y="789.4" font-size="15.2" font-weight="bold" textLength="62" lengthAdjust="spacingAndGlyphs" fill="#f6f6f6">x: CIE31</text>
<text x="998.6" y="789.4" font-size="15" textLength="30.8" lengthAdjust="spacingAndGlyphs" fill="#f0f0f0">0,30</text>
<text x="1074.6" y="789.4" font-size="15" textLength="30.8" lengthAdjust="spacingAndGlyphs" fill="#f0f0f0">0,31</text>
<text x="1141.9" y="789.4" font-size="15" textLength="30.8" lengthAdjust="spacingAndGlyphs" fill="#f0f0f0">0,32</text>
<text x="1209.3" y="789.4" font-size="15" textLength="30.8" lengthAdjust="spacingAndGlyphs" fill="#f0f0f0">0,32</text>
<text x="1276.6" y="789.4" font-size="15" textLength="30.8" lengthAdjust="spacingAndGlyphs" fill="#f0f0f0">0,32</text>
<text x="1343.4" y="789.4" font-size="15" textLength="30.8" lengthAdjust="spacingAndGlyphs" fill="#f0f0f0">0,32</text>
<text x="1410.8" y="789.4" font-size="15" textLength="30.8" lengthAdjust="spacingAndGlyphs" fill="#f0f0f0">0,32</text>
<text x="1478.1" y="789.4" font-size="15" textLength="30.8" lengthAdjust="spacingAndGlyphs" fill="#f0f0f0">0,32</text>
<text x="1545.4" y="789.4" font-size="15" textLength="30.8" lengthAdjust="spacingAndGlyphs" fill="#f0f0f0">0,32</text>
<text x="1612.8" y="789.4" font-size="15" textLength="30.8" lengthAdjust="spacingAndGlyphs" fill="#f0f0f0">0,31</text>
<text x="1680.1" y="789.4" font-size="15" textLength="30.8" lengthAdjust="spacingAndGlyphs" fill="#f0f0f0">0,31</text>
<text x="848.4" y="816.2" font-size="15.2" font-weight="bold" textLength="62" lengthAdjust="spacingAndGlyphs" fill="#f6f6f6">y: CIE31</text>
<text x="998.6" y="816.2" font-size="15" textLength="30.8" lengthAdjust="spacingAndGlyphs" fill="#f0f0f0">0,30</text>
<text x="1074.6" y="816.2" font-size="15" textLength="30.8" lengthAdjust="spacingAndGlyphs" fill="#f0f0f0">0,33</text>
<text x="1141.9" y="816.2" font-size="15" textLength="30.8" lengthAdjust="spacingAndGlyphs" fill="#f0f0f0">0,33</text>
<text x="1209.3" y="816.2" font-size="15" textLength="30.8" lengthAdjust="spacingAndGlyphs" fill="#f0f0f0">0,34</text>
<text x="1276.6" y="816.2" font-size="15" textLength="30.8" lengthAdjust="spacingAndGlyphs" fill="#f0f0f0">0,34</text>
<text x="1343.4" y="816.2" font-size="15" textLength="30.8" lengthAdjust="spacingAndGlyphs" fill="#f0f0f0">0,34</text>
<text x="1410.8" y="816.2" font-size="15" textLength="30.8" lengthAdjust="spacingAndGlyphs" fill="#f0f0f0">0,34</text>
<text x="1478.1" y="816.2" font-size="15" textLength="30.8" lengthAdjust="spacingAndGlyphs" fill="#f0f0f0">0,34</text>
<text x="1545.4" y="816.2" font-size="15" textLength="30.8" lengthAdjust="spacingAndGlyphs" fill="#f0f0f0">0,33</text>
<text x="1612.8" y="816.2" font-size="15" textLength="30.8" lengthAdjust="spacingAndGlyphs" fill="#f0f0f0">0,33</text>
<text x="1680.1" y="816.2" font-size="15" textLength="30.8" lengthAdjust="spacingAndGlyphs" fill="#f0f0f0">0,33</text>
<text x="848.4" y="843.0" font-size="15.2" font-weight="bold" textLength="9.7" lengthAdjust="spacingAndGlyphs" fill="#f6f6f6">Y</text>
<text x="998.6" y="843.0" font-size="15" textLength="30.8" lengthAdjust="spacingAndGlyphs" fill="#f0f0f0">0,37</text>
<text x="1074.6" y="843.0" font-size="15" textLength="30.8" lengthAdjust="spacingAndGlyphs" fill="#f0f0f0">1,39</text>
<text x="1141.9" y="843.0" font-size="15" textLength="30.8" lengthAdjust="spacingAndGlyphs" fill="#f0f0f0">4,75</text>
<text x="1209.3" y="843.0" font-size="15" textLength="39.9" lengthAdjust="spacingAndGlyphs" fill="#f0f0f0">10,83</text>
<text x="1276.6" y="843.0" font-size="15" textLength="39.9" lengthAdjust="spacingAndGlyphs" fill="#f0f0f0">20,24</text>
<text x="1343.4" y="843.0" font-size="15" textLength="39.9" lengthAdjust="spacingAndGlyphs" fill="#f0f0f0">32,88</text>
<text x="1410.8" y="843.0" font-size="15" textLength="39.9" lengthAdjust="spacingAndGlyphs" fill="#f0f0f0">48,36</text>
<text x="1478.1" y="843.0" font-size="15" textLength="39.9" lengthAdjust="spacingAndGlyphs" fill="#f0f0f0">67,03</text>
<text x="1545.4" y="843.0" font-size="15" textLength="39.9" lengthAdjust="spacingAndGlyphs" fill="#f0f0f0">90,07</text>
<text x="1612.8" y="843.0" font-size="15" textLength="48.9" lengthAdjust="spacingAndGlyphs" fill="#f0f0f0">117,07</text>
<text x="1680.1" y="843.0" font-size="15" textLength="48.9" lengthAdjust="spacingAndGlyphs" fill="#f0f0f0">147,87</text>
<text x="848.4" y="869.8" font-size="15.2" font-weight="bold" textLength="65.4" lengthAdjust="spacingAndGlyphs" fill="#f6f6f6">Target Y</text>
<text x="998.6" y="869.8" font-size="15" textLength="30.8" lengthAdjust="spacingAndGlyphs" fill="#f0f0f0">0,00</text>
<text x="1074.6" y="869.8" font-size="15" textLength="30.8" lengthAdjust="spacingAndGlyphs" fill="#f0f0f0">1,53</text>
<text x="1141.9" y="869.8" font-size="15" textLength="30.8" lengthAdjust="spacingAndGlyphs" fill="#f0f0f0">4,90</text>
<text x="1209.3" y="869.8" font-size="15" textLength="39.9" lengthAdjust="spacingAndGlyphs" fill="#f0f0f0">10,69</text>
<text x="1276.6" y="869.8" font-size="15" textLength="39.9" lengthAdjust="spacingAndGlyphs" fill="#f0f0f0">19,65</text>
<text x="1343.4" y="869.8" font-size="15" textLength="39.9" lengthAdjust="spacingAndGlyphs" fill="#f0f0f0">31,92</text>
<text x="1410.8" y="869.8" font-size="15" textLength="39.9" lengthAdjust="spacingAndGlyphs" fill="#f0f0f0">47,10</text>
<text x="1478.1" y="869.8" font-size="15" textLength="39.9" lengthAdjust="spacingAndGlyphs" fill="#f0f0f0">65,83</text>
<text x="1545.4" y="869.8" font-size="15" textLength="39.9" lengthAdjust="spacingAndGlyphs" fill="#f0f0f0">89,29</text>
<text x="1612.8" y="869.8" font-size="15" textLength="48.9" lengthAdjust="spacingAndGlyphs" fill="#f0f0f0">117,01</text>
<text x="1680.1" y="869.8" font-size="15" textLength="48.9" lengthAdjust="spacingAndGlyphs" fill="#f0f0f0">147,87</text>
<text x="848.4" y="896.6" font-size="15.2" font-weight="bold" textLength="132.7" lengthAdjust="spacingAndGlyphs" fill="#f6f6f6">Gamma Log/Log</text>
<text x="998.6" y="896.6" font-size="15" textLength="30.8" lengthAdjust="spacingAndGlyphs" fill="#f0f0f0">1,28</text>
<text x="1074.6" y="896.6" font-size="15" textLength="30.8" lengthAdjust="spacingAndGlyphs" fill="#f0f0f0">2,05</text>
<text x="1141.9" y="896.6" font-size="15" textLength="30.8" lengthAdjust="spacingAndGlyphs" fill="#f0f0f0">2,14</text>
<text x="1209.3" y="896.6" font-size="15" textLength="30.8" lengthAdjust="spacingAndGlyphs" fill="#f0f0f0">2,16</text>
<text x="1276.6" y="896.6" font-size="15" textLength="30.8" lengthAdjust="spacingAndGlyphs" fill="#f0f0f0">2,17</text>
<text x="1343.4" y="896.6" font-size="15" textLength="30.8" lengthAdjust="spacingAndGlyphs" fill="#f0f0f0">2,18</text>
<text x="1410.8" y="896.6" font-size="15" textLength="30.8" lengthAdjust="spacingAndGlyphs" fill="#f0f0f0">2,19</text>
<text x="1478.1" y="896.6" font-size="15" textLength="30.8" lengthAdjust="spacingAndGlyphs" fill="#f0f0f0">2,20</text>
<text x="1545.4" y="896.6" font-size="15" textLength="30.8" lengthAdjust="spacingAndGlyphs" fill="#f0f0f0">2,22</text>
<text x="1612.8" y="896.6" font-size="15" textLength="30.8" lengthAdjust="spacingAndGlyphs" fill="#f0f0f0">2,26</text>
<text x="1680.1" y="896.6" font-size="15" textLength="30.8" lengthAdjust="spacingAndGlyphs" fill="#f0f0f0">2,27</text>
<text x="848.4" y="923.4" font-size="15.2" font-weight="bold" textLength="29" lengthAdjust="spacingAndGlyphs" fill="#f6f6f6">CCT</text>
<text x="998.6" y="923.4" font-size="15" textLength="58.0" lengthAdjust="spacingAndGlyphs" fill="#f0f0f0">7407,00</text>
<text x="1074.6" y="923.4" font-size="15" textLength="58.0" lengthAdjust="spacingAndGlyphs" fill="#f0f0f0">6456,00</text>
<text x="1141.9" y="923.4" font-size="15" textLength="58.0" lengthAdjust="spacingAndGlyphs" fill="#f0f0f0">6280,00</text>
<text x="1209.3" y="923.4" font-size="15" textLength="58.0" lengthAdjust="spacingAndGlyphs" fill="#f0f0f0">6240,00</text>
<text x="1276.6" y="923.4" font-size="15" textLength="58.0" lengthAdjust="spacingAndGlyphs" fill="#f0f0f0">6242,00</text>
<text x="1343.4" y="923.4" font-size="15" textLength="58.0" lengthAdjust="spacingAndGlyphs" fill="#f0f0f0">6247,00</text>
<text x="1410.8" y="923.4" font-size="15" textLength="58.0" lengthAdjust="spacingAndGlyphs" fill="#f0f0f0">6262,00</text>
<text x="1478.1" y="923.4" font-size="15" textLength="58.0" lengthAdjust="spacingAndGlyphs" fill="#f0f0f0">6281,00</text>
<text x="1545.4" y="923.4" font-size="15" textLength="58.0" lengthAdjust="spacingAndGlyphs" fill="#f0f0f0">6312,00</text>
<text x="1612.8" y="923.4" font-size="15" textLength="58.0" lengthAdjust="spacingAndGlyphs" fill="#f0f0f0">6354,00</text>
<text x="1680.1" y="923.4" font-size="15" textLength="58.0" lengthAdjust="spacingAndGlyphs" fill="#f0f0f0">6483,00</text>
<text x="848.4" y="950.2" font-size="15.2" font-weight="bold" textLength="65" lengthAdjust="spacingAndGlyphs" fill="#f6f6f6">ΔE 2000</text>
<text x="998.6" y="950.2" font-size="15" textLength="30.8" lengthAdjust="spacingAndGlyphs" fill="#f0f0f0">1,85</text>
<text x="1074.6" y="950.2" font-size="15" textLength="30.8" lengthAdjust="spacingAndGlyphs" fill="#f0f0f0">0,90</text>
<text x="1141.9" y="950.2" font-size="15" textLength="30.8" lengthAdjust="spacingAndGlyphs" fill="#f0f0f0">0,88</text>
<text x="1209.3" y="950.2" font-size="15" textLength="30.8" lengthAdjust="spacingAndGlyphs" fill="#f0f0f0">1,54</text>
<text x="1276.6" y="950.2" font-size="15" textLength="30.8" lengthAdjust="spacingAndGlyphs" fill="#f0f0f0">2,13</text>
<text x="1343.4" y="950.2" font-size="15" textLength="30.8" lengthAdjust="spacingAndGlyphs" fill="#f0f0f0">2,50</text>
<text x="1410.8" y="950.2" font-size="15" textLength="30.8" lengthAdjust="spacingAndGlyphs" fill="#f0f0f0">2,69</text>
<text x="1478.1" y="950.2" font-size="15" textLength="30.8" lengthAdjust="spacingAndGlyphs" fill="#f0f0f0">2,76</text>
<text x="1545.4" y="950.2" font-size="15" textLength="30.8" lengthAdjust="spacingAndGlyphs" fill="#f0f0f0">2,69</text>
<text x="1612.8" y="950.2" font-size="15" textLength="30.8" lengthAdjust="spacingAndGlyphs" fill="#f0f0f0">2,49</text>
<text x="1680.1" y="950.2" font-size="15" textLength="30.8" lengthAdjust="spacingAndGlyphs" fill="#f0f0f0">1,55</text>
<text x="252.8" y="1049.5" font-size="9.5" text-anchor="middle" font-weight="bold" textLength="5.8" lengthAdjust="spacingAndGlyphs" fill="#303030" stroke="#303030" stroke-width="0.2">0</text>
<text x="383.1" y="1049.5" font-size="9.5" text-anchor="middle" font-weight="bold" textLength="11.5" lengthAdjust="spacingAndGlyphs" fill="#303030" stroke="#303030" stroke-width="0.2">10</text>
<text x="513.4" y="1049.5" font-size="9.5" text-anchor="middle" font-weight="bold" textLength="11.5" lengthAdjust="spacingAndGlyphs" fill="#303030" stroke="#303030" stroke-width="0.2">20</text>
<text x="643.7" y="1049.5" font-size="9.5" text-anchor="middle" font-weight="bold" textLength="11.5" lengthAdjust="spacingAndGlyphs" fill="#303030" stroke="#303030" stroke-width="0.2">30</text>
<text x="774.0" y="1049.5" font-size="9.5" text-anchor="middle" font-weight="bold" textLength="11.5" lengthAdjust="spacingAndGlyphs" fill="#303030" stroke="#303030" stroke-width="0.2">40</text>
<text x="904.3" y="1049.5" font-size="9.5" text-anchor="middle" font-weight="bold" textLength="11.5" lengthAdjust="spacingAndGlyphs" fill="#303030" stroke="#303030" stroke-width="0.2">50</text>
<text x="1034.6" y="1049.5" font-size="9.5" text-anchor="middle" font-weight="bold" textLength="11.5" lengthAdjust="spacingAndGlyphs" fill="#303030" stroke="#303030" stroke-width="0.2">60</text>
<text x="1164.9" y="1049.5" font-size="9.5" text-anchor="middle" font-weight="bold" textLength="11.5" lengthAdjust="spacingAndGlyphs" fill="#303030" stroke="#303030" stroke-width="0.2">70</text>
<text x="1295.2" y="1049.5" font-size="9.5" text-anchor="middle" font-weight="bold" textLength="11.5" lengthAdjust="spacingAndGlyphs" fill="#303030" stroke="#303030" stroke-width="0.2">80</text>
<text x="1425.5" y="1049.5" font-size="9.5" text-anchor="middle" font-weight="bold" textLength="11.5" lengthAdjust="spacingAndGlyphs" fill="#303030" stroke="#303030" stroke-width="0.2">90</text>
<text x="1555.8" y="1049.5" font-size="9.5" text-anchor="middle" font-weight="bold" textLength="17" lengthAdjust="spacingAndGlyphs" fill="#fff">100</text>
<path d="M1641.2 1007l4.3-3.4l4.3 3.4z" fill="#2a2a2a"/>
<rect x="1686.6" y="1006.8" width="8" height="8" fill="#303030"/>
<path d="M1730.8 1006.2l8.4 4.8l-8.4 4.8z" fill="#2c2c2c"/>
<path d="M1772.8 1005.6h-2.3v10.6h2.3M1779.6 1005.6h2.3v10.6h-2.3" fill="none" stroke="#303030" stroke-width="1.5"/><path d="M1773 1010.900l2-1.700v3.400zM1779.400 1010.900l-2-1.700v3.400z" fill="#303030"/><path d="M1774.500 1010.900h3.400" stroke="#303030" stroke-width="1"/>
<path d="M1818.4 1010.8c-1.300-2.100-2.400-2.900-3.700-2.900a2.900 2.900 0 0 0 0 5.800c1.300 0 2.400-0.800 3.700-2.900c1.300-2.100 2.400-2.900 3.700-2.900a2.900 2.900 0 0 1 0 5.800c-1.300 0-2.400-0.800-3.700-2.900z" fill="none" stroke="#303030" stroke-width="1.600"/>
<path d="M1856.800 1009.800a4.300 4.300 0 0 1 7.400-2.200M1865.200 1012.400a4.300 4.300 0 0 1 -7.400 2.200" fill="none" stroke="#303030" stroke-width="2"/>
<path d="M1866 1005.200v4h-4zM1856 1017v-4h4z" fill="#303030"/>
<path d="M1698.200 1035.800l-3.400 4.200l3.400 4.200M1702.400 1035.800l-3.400 4.200l3.400 4.200" fill="none" stroke="#333" stroke-width="1.4"/>
<path d="M1895.800 1035.800l3.400 4.200l-3.400 4.200M1900 1035.800l3.400 4.200l-3.400 4.200" fill="none" stroke="#333" stroke-width="1.4"/>
<text x="1723.3" y="1046.7" font-size="18.6" textLength="46.7" lengthAdjust="spacingAndGlyphs" fill="#333" stroke="#333" stroke-width="0.5">Back</text>
<text x="1823.3" y="1046.7" font-size="18.6" textLength="48.4" lengthAdjust="spacingAndGlyphs" fill="#333" stroke="#333" stroke-width="0.5">Next</text>
</svg>
</body></html>
